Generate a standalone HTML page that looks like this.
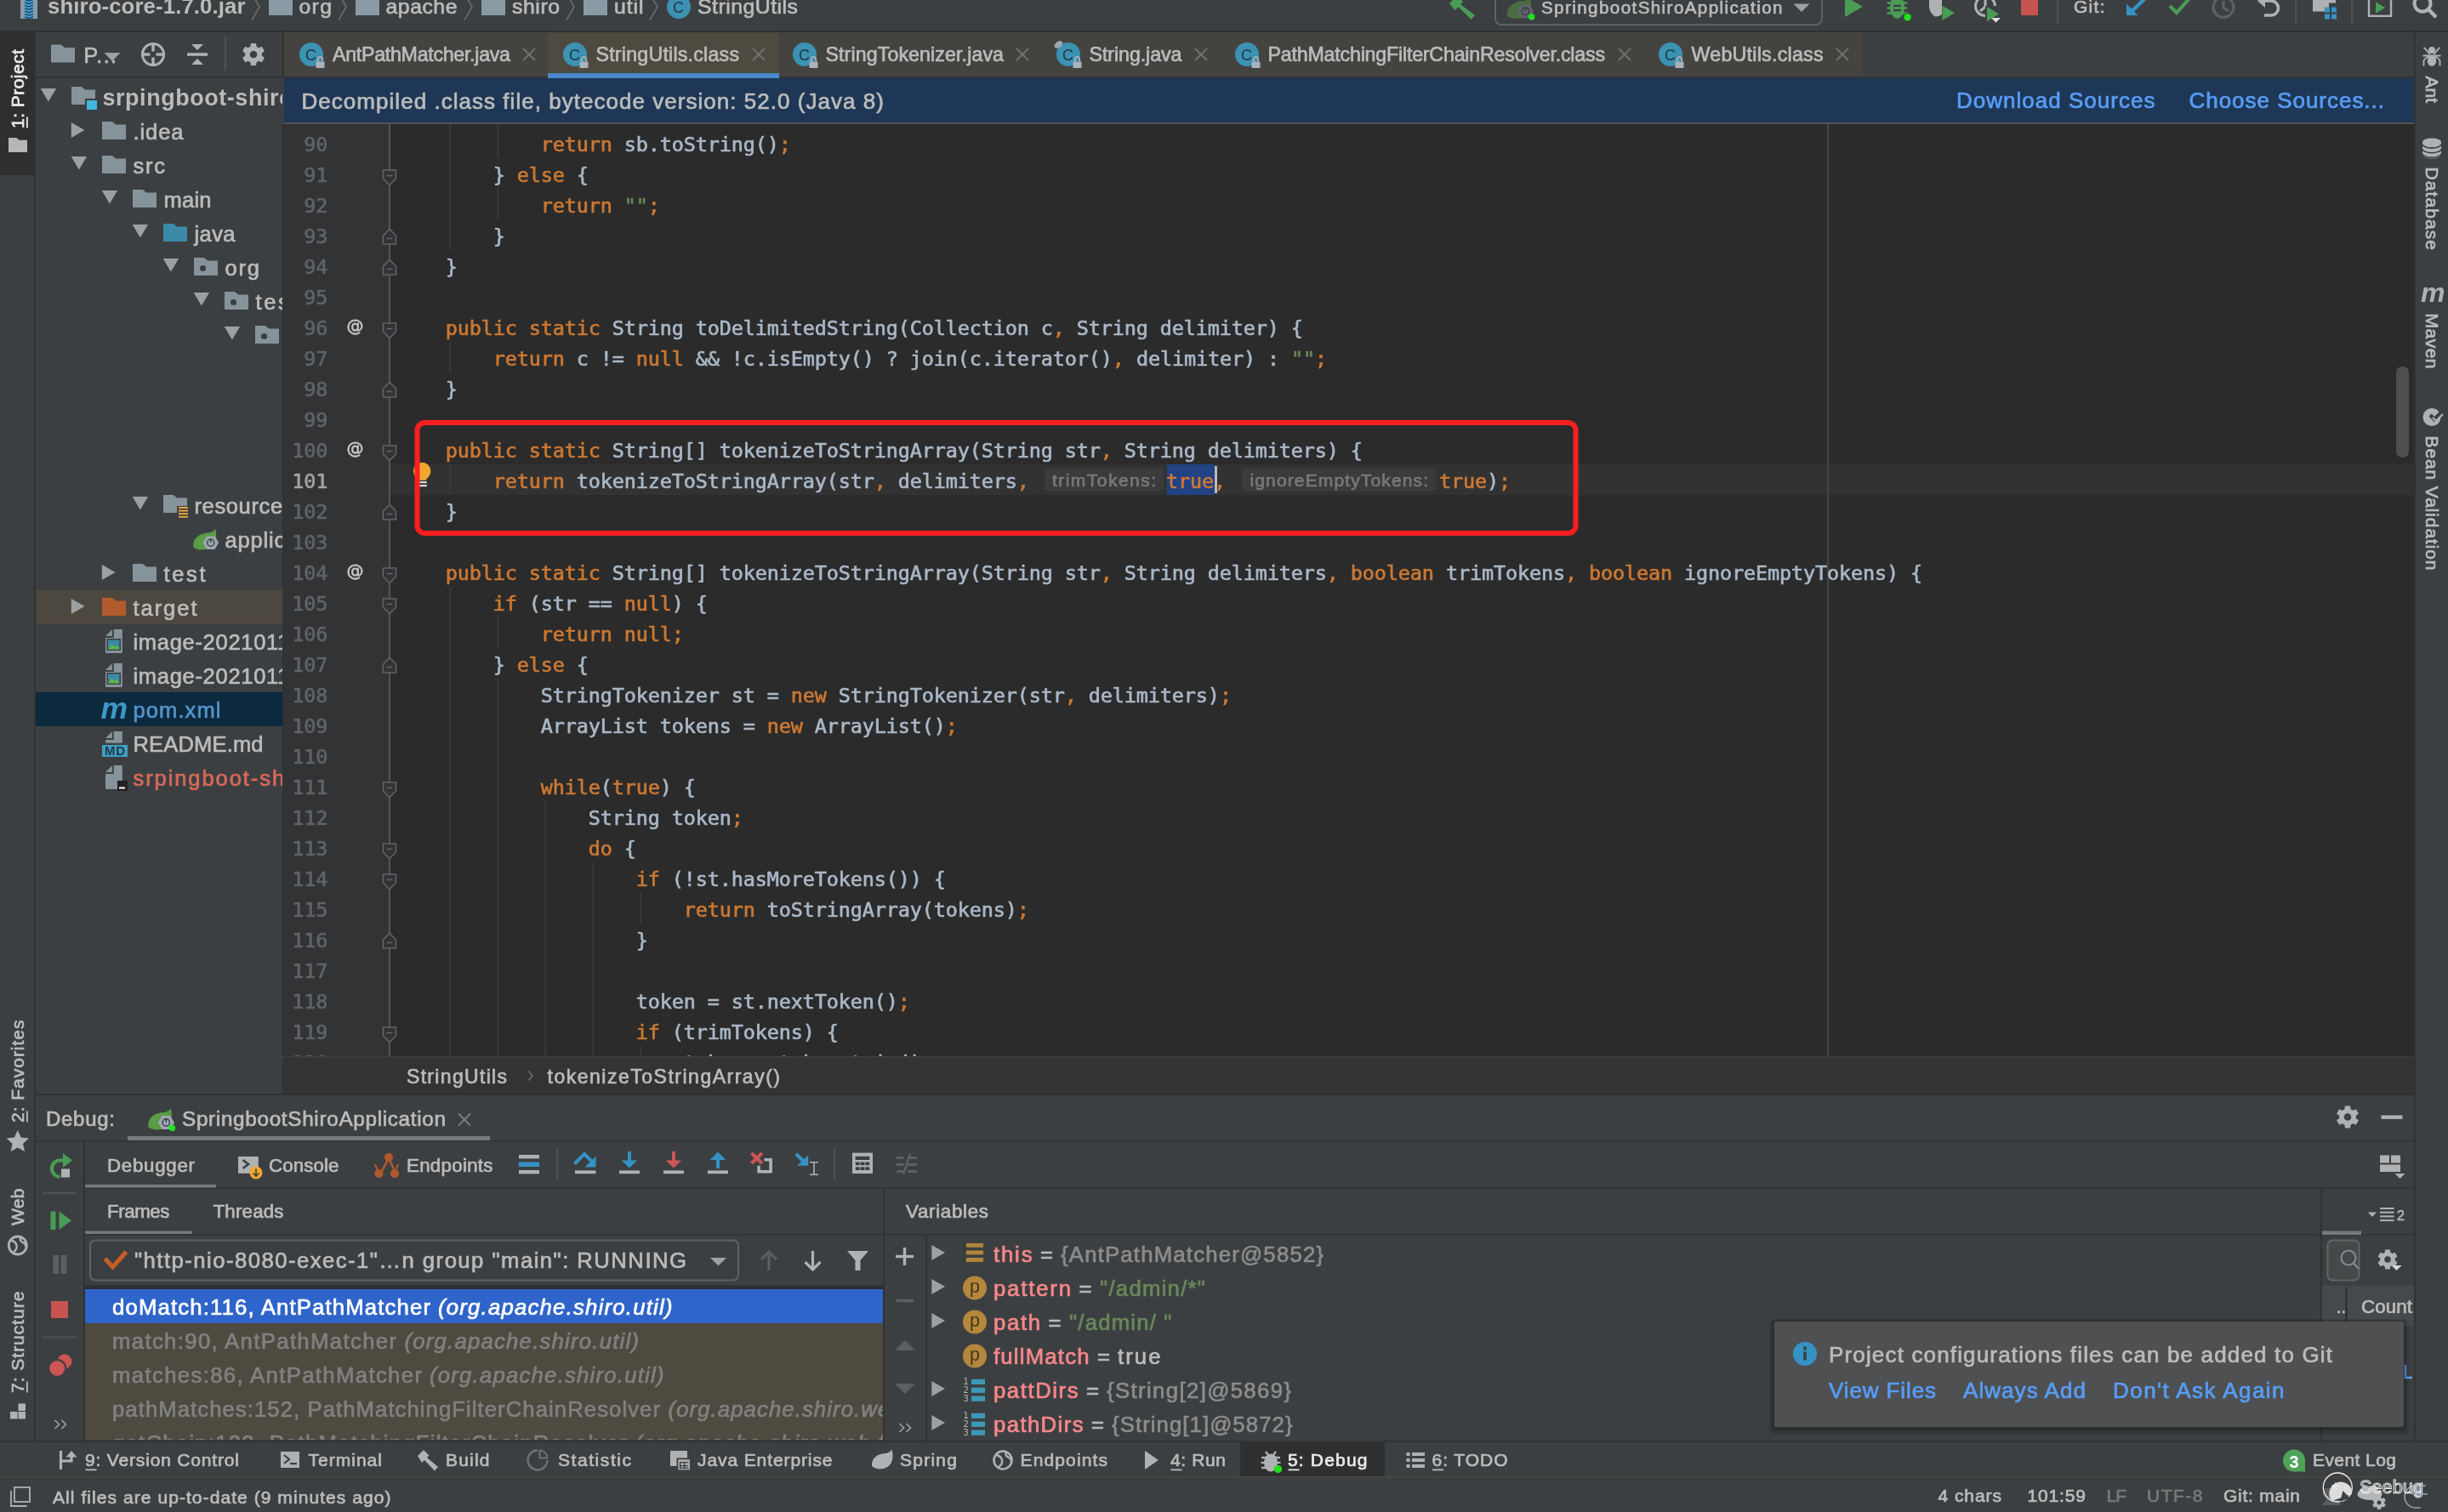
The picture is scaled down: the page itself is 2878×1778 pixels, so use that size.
<!DOCTYPE html>
<html lang="en"><head><meta charset="utf-8"><title>StringUtils.class - srpingboot-shiro</title>
<style>
html,body{margin:0;padding:0;background:#3c3f41;overflow:hidden}
svg{display:block;font-family:"Liberation Sans", "Noto Sans CJK SC", sans-serif;will-change:transform}
text{white-space:pre}
.code{font-family:"DejaVu Sans Mono", "Liberation Mono", monospace;font-size:23.5px;letter-spacing:-0.148px;stroke-width:0.65px}
</style></head><body>
<svg width="2878" height="1778" viewBox="0 0 2878 1778">
<rect x="0" y="0" width="2878" height="1778" fill="#3c3f41"/>
<rect x="0" y="36" width="2878" height="2" fill="#2d2f30"/>
<rect x="0" y="38" width="40" height="1656" fill="#3c3f41"/>
<rect x="0" y="38" width="40" height="168" fill="#2d2f30"/>
<rect x="40" y="38" width="2" height="1656" fill="#323232"/>
<rect x="2838" y="38" width="40" height="1656" fill="#3c3f41"/>
<rect x="2838" y="38" width="2" height="1656" fill="#323232"/>
<rect x="24" y="-6" width="5" height="28" fill="#8a9ba6"/>
<rect x="39" y="-6" width="5" height="28" fill="#8a9ba6"/>
<rect x="29" y="-6" width="10" height="28" fill="#3a9ad0"/>
<path d="M29,-4.0 l5,1.7 l5,-1.7" fill="none" stroke="#1d2b33" stroke-width="1"/>
<path d="M29,-0.6 l5,1.7 l5,-1.7" fill="none" stroke="#1d2b33" stroke-width="1"/>
<path d="M29,2.8 l5,1.7 l5,-1.7" fill="none" stroke="#1d2b33" stroke-width="1"/>
<path d="M29,6.2 l5,1.7 l5,-1.7" fill="none" stroke="#1d2b33" stroke-width="1"/>
<path d="M29,9.6 l5,1.7 l5,-1.7" fill="none" stroke="#1d2b33" stroke-width="1"/>
<path d="M29,13.0 l5,1.7 l5,-1.7" fill="none" stroke="#1d2b33" stroke-width="1"/>
<path d="M29,16.4 l5,1.7 l5,-1.7" fill="none" stroke="#1d2b33" stroke-width="1"/>
<path d="M29,19.8 l5,1.7 l5,-1.7" fill="none" stroke="#1d2b33" stroke-width="1"/>
<text x="56" y="16.3" font-size="25.8" fill="#bbbbbb" textLength="232.5" lengthAdjust="spacing" font-weight="bold">shiro-core-1.7.0.jar</text>
<path d="M296,-7.5 l9,15.6 l-9,15.6" fill="none" stroke="#6b6e70" stroke-width="1.6"/>
<path d="M316,-4 h11.8 l4.6,3.5 H344 V18 H316 Z" fill="#8a9ba6"/>
<text x="351.5" y="16.3" font-size="24.82" fill="#bbbbbb" textLength="38.5" lengthAdjust="spacing" stroke="#bbbbbb" stroke-width="0.7">org</text>
<path d="M398,-7.5 l9,15.6 l-9,15.6" fill="none" stroke="#6b6e70" stroke-width="1.6"/>
<path d="M418,-4 h11.8 l4.6,3.5 H446 V18 H418 Z" fill="#8a9ba6"/>
<text x="453.5" y="16.3" font-size="24.82" fill="#bbbbbb" textLength="84.0" lengthAdjust="spacing" stroke="#bbbbbb" stroke-width="0.7">apache</text>
<path d="M546,-7.5 l9,15.6 l-9,15.6" fill="none" stroke="#6b6e70" stroke-width="1.6"/>
<path d="M566,-4 h11.8 l4.6,3.5 H594 V18 H566 Z" fill="#8a9ba6"/>
<text x="602" y="16.3" font-size="24.82" fill="#bbbbbb" textLength="56" lengthAdjust="spacing" stroke="#bbbbbb" stroke-width="0.7">shiro</text>
<path d="M666,-7.5 l9,15.6 l-9,15.6" fill="none" stroke="#6b6e70" stroke-width="1.6"/>
<path d="M686,-4 h11.8 l4.6,3.5 H714 V18 H686 Z" fill="#8a9ba6"/>
<text x="722" y="16.3" font-size="24.82" fill="#bbbbbb" textLength="34.5" lengthAdjust="spacing" stroke="#bbbbbb" stroke-width="0.7">util</text>
<path d="M764,-7.5 l9,15.6 l-9,15.6" fill="none" stroke="#6b6e70" stroke-width="1.6"/>
<circle cx="798" cy="8" r="14" fill="#3b92b2"/>
<text x="797.5" y="14.5" font-size="18" fill="#1f3640" font-weight="400" text-anchor="middle">C</text>
<text x="820" y="16.3" font-size="24.82" fill="#bbbbbb" textLength="118" lengthAdjust="spacing" stroke="#bbbbbb" stroke-width="0.7">StringUtils</text>
<path d="M1704,4 l9,-9 l7,7 l-3,3 l17,13 l-4.5,5 l-15,-15 l-4,4 Z" fill="#499c54"/>
<rect x="1758" y="-12" width="384" height="41" fill="none" rx="7" stroke="#5e6366" stroke-width="2"/>
<g transform="translate(1772,1) scale(0.82)">
<path d="M0,22 C-2,8 10,0 24,0 C28,-1 31,-3 33,-6 C36,6 34,20 22,24 C14,27 6,26 0,22 Z" fill="#4a6b3f"/>
<path d="M14,15 l6,-10 h12 l6,10 l-6,10 h-12 Z" fill="#5d6469"/>
<circle cx="26" cy="15" r="5.2" fill="none" stroke="#3c3f41" stroke-width="1.8"/>
<line x1="26" y1="8.5" x2="26" y2="14.5" stroke="#3c3f41" stroke-width="2" />
<circle cx="35" cy="23" r="4.6" fill="#1fe21a"/>
</g>
<text x="1812" y="15.9" font-size="20.52" fill="#bbbbbb" textLength="283.5" lengthAdjust="spacing" stroke="#bbbbbb" stroke-width="0.7">SpringbootShiroApplication</text>
<path d="M2108.5,4.5 h19 l-9.5,9.5 Z" fill="#9da0a2"/>
<g transform="translate(0,5)">
<path d="M2169,-9.5 l21,12.2 l-21,12.2 Z" fill="#499c54"/>
<ellipse cx="2230.5" cy="3.5" rx="8.6" ry="13.2" fill="#499c54"/>
<rect x="2218.6" y="-2.8" width="23.6" height="2.6" fill="#499c54"/>
<rect x="2218.6" y="3.2" width="23.6" height="2.6" fill="#499c54"/>
<rect x="2218.6" y="9.2" width="23.6" height="2.6" fill="#499c54"/>
<rect x="2226" y="0.7" width="9" height="2.3" fill="#3c3f41"/>
<rect x="2226" y="5.9" width="9" height="2.3" fill="#3c3f41"/>
<circle cx="2242.6" cy="15.3" r="5.2" fill="#3c3f41"/>
<circle cx="2242.6" cy="15.3" r="4.2" fill="#1fe21a"/>
<path d="M2268,-10 h15 v22 c-3,2 -6,2.5 -8,2.5 c-5,-3 -7,-8 -7,-14 Z" fill="#afb1b3"/>
<path d="M2283.5,1.5 l14.5,8.8 l-14.5,8.8 Z" fill="#499c54"/>
<circle cx="2334" cy="2" r="11.5" fill="none" stroke="#afb1b3" stroke-width="3"/>
<line x1="2334" y1="-5" x2="2334" y2="3" stroke="#afb1b3" stroke-width="3" />
<line x1="2334" y1="3" x2="2328" y2="8" stroke="#afb1b3" stroke-width="3" />
<path d="M2334,2 h14 v14 h-14 Z" fill="#3c3f41"/>
<path d="M2336,3 l14,8.5 l-14,8.5 Z" fill="#499c54"/>
<path d="M2341,16 h11 l-5.5,5.5 Z" fill="#e0e0e0"/>
<rect x="2376" y="-8" width="20" height="21" fill="#c75450"/>
</g>
<line x1="2419" y1="-4" x2="2419" y2="28" stroke="#515151" stroke-width="2" />
<text x="2438" y="15" font-size="21.02" fill="#bbbbbb" textLength="36.5" lengthAdjust="spacing" stroke="#bbbbbb" stroke-width="0.7">Git:</text>
<g transform="translate(0,4)">
<path d="M2521.5,-5.5 L2505,10.5" fill="none" stroke="#3592c4" stroke-width="4.4"/>
<path d="M2500,0.5 V14.1 H2513.6 Z" fill="#3592c4"/>
<path d="M2551,3 l8,8 l16,-18" fill="none" stroke="#499c54" stroke-width="4.2"/>
<circle cx="2614" cy="4.4" r="12" fill="none" stroke="#5c5f61" stroke-width="3.4"/>
<path d="M2614,-3 V5 l6,4" fill="none" stroke="#5c5f61" stroke-width="3.2"/>
<path d="M2657,-3 H2670 a8.5,8.5 0 0 1 0,17 H2662" fill="none" stroke="#afb1b3" stroke-width="3.6"/>
<path d="M2654,-3 l9,-8 v16 Z" fill="#afb1b3"/>
</g>
<line x1="2699" y1="-4" x2="2699" y2="28" stroke="#515151" stroke-width="2" />
<g transform="translate(0,-0.5)">
<path d="M2719,-10 h11 l3,3 h13 v11 h-8 v10 h-19 Z" fill="#afb1b3"/>
<rect x="2733" y="9" width="6" height="6" fill="#3592c4"/>
<rect x="2741" y="9" width="6" height="6" fill="#3592c4"/>
<rect x="2733" y="17" width="6" height="6" fill="#3592c4"/>
<rect x="2741" y="17" width="6" height="6" fill="#3592c4"/>
</g>
<line x1="2765" y1="-4" x2="2765" y2="28" stroke="#515151" stroke-width="2" />
<g transform="translate(0,0.8)">
<rect x="2785" y="-6" width="26" height="24" fill="none" stroke="#afb1b3" stroke-width="2.4"/>
<path d="M2793,1.5 l11.5,6.7 l-11.5,6.7 Z" fill="#499c54"/>
<circle cx="2848" cy="3.2" r="9.5" fill="none" stroke="#afb1b3" stroke-width="4"/>
<line x1="2855" y1="10.2" x2="2864" y2="19.5" stroke="#afb1b3" stroke-width="4.5" />
</g>
<clipPath id="cpProj"><rect x="42" y="38" width="290" height="1249"/></clipPath>
<g clip-path="url(#cpProj)">
<path d="M60,52.5 h11.8 l4.4,3.4 H88 V73.5 H60 Z" fill="#87939a"/>
<text x="98.5" y="74" font-size="25.02" fill="#bbbbbb" textLength="38.5" lengthAdjust="spacing" stroke="#bbbbbb" stroke-width="0.7">P...</text>
<path d="M122.5,62 h19 l-9.5,10 Z" fill="#9da0a2"/>
<circle cx="180" cy="64" r="12.5" fill="none" stroke="#afb1b3" stroke-width="3"/>
<line x1="180" y1="50" x2="180" y2="60.5" stroke="#afb1b3" stroke-width="3.4" />
<line x1="180" y1="67.5" x2="180" y2="78" stroke="#afb1b3" stroke-width="3.4" />
<line x1="166" y1="64" x2="176.5" y2="64" stroke="#afb1b3" stroke-width="3.4" />
<line x1="183.5" y1="64" x2="194" y2="64" stroke="#afb1b3" stroke-width="3.4" />
<line x1="220" y1="64" x2="244" y2="64" stroke="#afb1b3" stroke-width="3.6" />
<path d="M225,52 h14 l-7,7 Z" fill="#afb1b3"/>
<path d="M225,76 h14 l-7,-7 Z" fill="#afb1b3"/>
<line x1="265" y1="44" x2="265" y2="83" stroke="#515151" stroke-width="2" />
<path d="M295.3,55.2 L295.5,51.7 L300.5,51.7 L300.7,55.2 L304.3,57.2 L307.4,55.7 L309.9,60.0 L307.0,61.9 L307.0,66.1 L309.9,68.0 L307.4,72.3 L304.3,70.8 L300.7,72.8 L300.5,76.3 L295.5,76.3 L295.3,72.8 L291.7,70.8 L288.6,72.3 L286.1,68.0 L289.0,66.1 L289.0,61.9 L286.1,60.0 L288.6,55.7 L291.7,57.2 Z" fill="#afb1b3" stroke="#afb1b3" stroke-width="1.6" stroke-linejoin="round"/>
<circle cx="298" cy="64" r="9.55" fill="#afb1b3"/>
<circle cx="298" cy="64" r="4.25" fill="#3c3f41"/>
<rect x="42" y="90" width="290" height="2" fill="#323232"/>
<path d="M47.7,104 h18.4 l-9.2,15.6 Z" fill="#9da0a2"/>
<path d="M84,102 h11.8 l4.4,3.4 H112 V123 H84 Z" fill="#87939a"/>
<rect x="100" y="116" width="14" height="14" fill="#3c3f41"/>
<rect x="102" y="118" width="12" height="11" fill="#40b6e0"/>
<text x="120.5" y="123.6" font-size="27" fill="#bbbbbb" textLength="224.0" lengthAdjust="spacing" font-weight="bold">srpingboot-shiro</text>
<path d="M83.8,144.1 l15.7,9 l-15.7,9 Z" fill="#9da0a2"/>
<path d="M120,143 h11.8 l4.4,3.4 H148 V164 H120 Z" fill="#87939a"/>
<text x="156.5" y="163.6" font-size="25.52" fill="#bbbbbb" textLength="59.0" lengthAdjust="spacing" stroke="#bbbbbb" stroke-width="0.7">.idea</text>
<path d="M83.7,184 h18.4 l-9.2,15.6 Z" fill="#9da0a2"/>
<path d="M120,183 h11.8 l4.4,3.4 H148 V204 H120 Z" fill="#87939a"/>
<text x="156.5" y="203.6" font-size="25.52" fill="#bbbbbb" textLength="37.5" lengthAdjust="spacing" stroke="#bbbbbb" stroke-width="0.7">src</text>
<path d="M119.7,224 h18.4 l-9.2,15.6 Z" fill="#9da0a2"/>
<path d="M156,223 h11.8 l4.4,3.4 H184 V244 H156 Z" fill="#87939a"/>
<text x="192.5" y="243.6" font-size="25.52" fill="#bbbbbb" textLength="56.0" lengthAdjust="spacing" stroke="#bbbbbb" stroke-width="0.7">main</text>
<path d="M155.7,264 h18.4 l-9.2,15.6 Z" fill="#9da0a2"/>
<path d="M192,263 h11.8 l4.4,3.4 H220 V284 H192 Z" fill="#3a8aa8"/>
<text x="228.5" y="283.6" font-size="25.52" fill="#bbbbbb" textLength="48.0" lengthAdjust="spacing" stroke="#bbbbbb" stroke-width="0.7">java</text>
<path d="M191.7,304 h18.4 l-9.2,15.6 Z" fill="#9da0a2"/>
<path d="M228,303 h11.8 l4.4,3.4 H256 V324 H228 Z" fill="#87939a"/>
<circle cx="238.5" cy="315.5" r="3.6" fill="#3c3f41"/>
<text x="264.5" y="323.6" font-size="25.52" fill="#bbbbbb" textLength="40.5" lengthAdjust="spacing" stroke="#bbbbbb" stroke-width="0.7">org</text>
<path d="M227.7,344 h18.4 l-9.2,15.6 Z" fill="#9da0a2"/>
<path d="M264,343 h11.8 l4.4,3.4 H292 V364 H264 Z" fill="#87939a"/>
<circle cx="274.5" cy="355.5" r="3.6" fill="#3c3f41"/>
<text x="300.5" y="363.6" font-size="25.52" fill="#bbbbbb" textLength="49.0" lengthAdjust="spacing" stroke="#bbbbbb" stroke-width="0.7">test</text>
<path d="M263.7,384 h18.4 l-9.2,15.6 Z" fill="#9da0a2"/>
<path d="M300,383 h11.8 l4.4,3.4 H328 V404 H300 Z" fill="#87939a"/>
<circle cx="310.5" cy="395.5" r="3.6" fill="#3c3f41"/>
<text x="336.5" y="403.6" font-size="25.52" fill="#bbbbbb" textLength="59.2" lengthAdjust="spacing" stroke="#bbbbbb" stroke-width="0.7">shiro</text>
<path d="M155.7,584 h18.4 l-9.2,15.6 Z" fill="#9da0a2"/>
<path d="M192,582 h11.8 l4.4,3.4 H220 V603 H192 Z" fill="#87939a"/>
<rect x="208" y="595" width="15" height="15" fill="#3c3f41"/>
<rect x="210" y="596.0" width="11" height="2" fill="#e8a33d"/>
<rect x="210" y="599.6" width="11" height="2" fill="#e8a33d"/>
<rect x="210" y="603.2" width="11" height="2" fill="#e8a33d"/>
<rect x="210" y="606.8" width="11" height="2" fill="#e8a33d"/>
<text x="228.5" y="603.6" font-size="25.52" fill="#bbbbbb" textLength="117.0" lengthAdjust="spacing" stroke="#bbbbbb" stroke-width="0.7">resources</text>
<g transform="translate(227.5,626.5) scale(0.78)">
<path d="M0,22 C-2,8 10,0 24,0 C28,-1 31,-3 33,-6 C36,6 34,20 22,24 C14,27 6,26 0,22 Z" fill="#5a9b46"/>
<path d="M14,15 l6,-10 h12 l6,10 l-6,10 h-12 Z" fill="#9aa7b0"/>
<circle cx="26" cy="15" r="5.2" fill="none" stroke="#3c3f41" stroke-width="1.8"/>
<line x1="26" y1="8.5" x2="26" y2="14.5" stroke="#3c3f41" stroke-width="2" />
</g>
<text x="264.5" y="643.6" font-size="25.52" fill="#bbbbbb" textLength="180.5" lengthAdjust="spacing" stroke="#bbbbbb" stroke-width="0.7">application.yml</text>
<path d="M119.8,664.1 l15.7,9 l-15.7,9 Z" fill="#9da0a2"/>
<path d="M156,663 h11.8 l4.4,3.4 H184 V684 H156 Z" fill="#87939a"/>
<text x="192.5" y="683.6" font-size="25.52" fill="#bbbbbb" textLength="49.0" lengthAdjust="spacing" stroke="#bbbbbb" stroke-width="0.7">test</text>
<rect x="42" y="694" width="290" height="40" fill="#4d483f"/>
<path d="M83.8,704.1 l15.7,9 l-15.7,9 Z" fill="#9da0a2"/>
<path d="M120,703 h11.8 l4.4,3.4 H148 V724 H120 Z" fill="#b25b2c"/>
<text x="156.5" y="723.6" font-size="25.52" fill="#bbbbbb" textLength="75.0" lengthAdjust="spacing" stroke="#bbbbbb" stroke-width="0.7">target</text>
<path d="M133.8,740 h10 v28 h-19.8 v-18 h9.8 Z" fill="#87939a"/>
<path d="M124,748.1 l7.9,-7.9 v7.9 Z" fill="#87939a"/>
<rect x="125.5" y="751" width="16.5" height="14" fill="#3c3f41"/>
<rect x="127" y="752.5" width="13.5" height="11" fill="#3a8aa8"/>
<path d="M127,763.5 l4.5,-6 l3.5,3.5 l2.5,-2.5 l3,5 Z" fill="#62b543"/>
<text x="156.5" y="763.6" font-size="25.52" fill="#bbbbbb" textLength="340.3" lengthAdjust="spacing" stroke="#bbbbbb" stroke-width="0.7">image-20210113142305.png</text>
<path d="M133.8,780 h10 v28 h-19.8 v-18 h9.8 Z" fill="#87939a"/>
<path d="M124,788.1 l7.9,-7.9 v7.9 Z" fill="#87939a"/>
<rect x="125.5" y="791" width="16.5" height="14" fill="#3c3f41"/>
<rect x="127" y="792.5" width="13.5" height="11" fill="#3a8aa8"/>
<path d="M127,803.5 l4.5,-6 l3.5,3.5 l2.5,-2.5 l3,5 Z" fill="#62b543"/>
<text x="156.5" y="803.6" font-size="25.52" fill="#bbbbbb" textLength="340.3" lengthAdjust="spacing" stroke="#bbbbbb" stroke-width="0.7">image-20210113142410.png</text>
<rect x="42" y="814" width="290" height="40" fill="#0d293e"/>
<text x="118.5" y="844.5" font-size="35.5" fill="#3b99c4" textLength="30.0" lengthAdjust="spacing" font-weight="bold" font-style="italic">m</text>
<text x="156.5" y="843.6" font-size="25.52" fill="#5394c9" textLength="103.0" lengthAdjust="spacing" stroke="#5394c9" stroke-width="0.7">pom.xml</text>
<path d="M133.8,860 h10 v13.8 h-19.8 v-3.8000000000000007 h9.8 Z" fill="#87939a"/>
<path d="M124,868.1 l7.9,-7.9 v7.9 Z" fill="#87939a"/>
<rect x="120" y="876" width="30" height="14" fill="#3e9fc1"/>
<text x="123" y="888.2" font-size="15" fill="#1f3a4a" textLength="24" lengthAdjust="spacing" font-weight="bold">MD</text>
<text x="156.5" y="883.6" font-size="25.52" fill="#bbbbbb" textLength="153.0" lengthAdjust="spacing" stroke="#bbbbbb" stroke-width="0.7">README.md</text>
<path d="M133.8,900 h10 v28 h-19.8 v-18 h9.8 Z" fill="#87939a"/>
<path d="M124,908.1 l7.9,-7.9 v7.9 Z" fill="#87939a"/>
<rect x="138" y="918" width="12" height="12" fill="#231f20"/>
<rect x="140" y="925.5" width="7" height="2" fill="#ffffff"/>
<text x="156.5" y="923.6" font-size="25.52" fill="#d7695b" textLength="259.0" lengthAdjust="spacing" stroke="#d7695b" stroke-width="0.7">srpingboot-shiro.iml</text>
</g>
<rect x="42" y="1286" width="290" height="2" fill="#2d2f30"/>
<rect x="332" y="38" width="2506" height="52" fill="#3c3f41"/>
<rect x="332" y="38" width="2" height="52" fill="#323232"/>
<rect x="334" y="38" width="1856" height="52" fill="#454340"/>
<rect x="644" y="38" width="272" height="54" fill="#4e4a40"/>
<rect x="332" y="90" width="2506" height="2" fill="#323232"/>
<rect x="644" y="86" width="272" height="6" fill="#4a88c7"/>
<circle cx="366" cy="64" r="14" fill="#3b92b2"/>
<text x="365.5" y="70.5" font-size="18" fill="#1f3640" font-weight="400" text-anchor="middle">C</text>
<rect x="371.5" y="72.5" width="10" height="7.5" fill="#a9b3bd"/>
<path d="M373.8,72.5 v-3 a2.7,2.7 0 0 1 5.4,0 v3" fill="none" stroke="#a9b3bd" stroke-width="1.8"/>
<text x="391" y="72.2" font-size="23.22" fill="#bbbbbb" textLength="209" lengthAdjust="spacing" stroke="#bbbbbb" stroke-width="0.7">AntPathMatcher.java</text>
<line x1="615" y1="57" x2="629" y2="71" stroke="#6e7370" stroke-width="1.8" />
<line x1="615" y1="71" x2="629" y2="57" stroke="#6e7370" stroke-width="1.8" />
<circle cx="676" cy="64" r="14" fill="#3b92b2"/>
<text x="675.5" y="70.5" font-size="18" fill="#1f3640" font-weight="400" text-anchor="middle">C</text>
<rect x="681.5" y="72.5" width="10" height="7.5" fill="#a9b3bd"/>
<path d="M683.8,72.5 v-3 a2.7,2.7 0 0 1 5.4,0 v3" fill="none" stroke="#a9b3bd" stroke-width="1.8"/>
<text x="700.5" y="72.2" font-size="23.22" fill="#bbbbbb" textLength="168.5" lengthAdjust="spacing" stroke="#bbbbbb" stroke-width="0.7">StringUtils.class</text>
<line x1="885" y1="57" x2="899" y2="71" stroke="#6e7370" stroke-width="1.8" />
<line x1="885" y1="71" x2="899" y2="57" stroke="#6e7370" stroke-width="1.8" />
<circle cx="946" cy="64" r="14" fill="#3b92b2"/>
<text x="945.5" y="70.5" font-size="18" fill="#1f3640" font-weight="400" text-anchor="middle">C</text>
<rect x="951.5" y="72.5" width="10" height="7.5" fill="#a9b3bd"/>
<path d="M953.8,72.5 v-3 a2.7,2.7 0 0 1 5.4,0 v3" fill="none" stroke="#a9b3bd" stroke-width="1.8"/>
<text x="970.5" y="72.2" font-size="23.22" fill="#bbbbbb" textLength="209.5" lengthAdjust="spacing" stroke="#bbbbbb" stroke-width="0.7">StringTokenizer.java</text>
<line x1="1195" y1="57" x2="1209" y2="71" stroke="#6e7370" stroke-width="1.8" />
<line x1="1195" y1="71" x2="1209" y2="57" stroke="#6e7370" stroke-width="1.8" />
<circle cx="1256" cy="64" r="14" fill="#3b92b2"/>
<text x="1255.5" y="70.5" font-size="18" fill="#1f3640" font-weight="400" text-anchor="middle">C</text>
<rect x="1261.5" y="72.5" width="10" height="7.5" fill="#a9b3bd"/>
<path d="M1263.8,72.5 v-3 a2.7,2.7 0 0 1 5.4,0 v3" fill="none" stroke="#a9b3bd" stroke-width="1.8"/>
<text x="1280.5" y="72.2" font-size="23.22" fill="#bbbbbb" textLength="109.0" lengthAdjust="spacing" stroke="#bbbbbb" stroke-width="0.7">String.java</text>
<line x1="1405" y1="57" x2="1419" y2="71" stroke="#6e7370" stroke-width="1.8" />
<line x1="1405" y1="71" x2="1419" y2="57" stroke="#6e7370" stroke-width="1.8" />
<circle cx="1466" cy="64" r="14" fill="#3b92b2"/>
<text x="1465.5" y="70.5" font-size="18" fill="#1f3640" font-weight="400" text-anchor="middle">C</text>
<rect x="1471.5" y="72.5" width="10" height="7.5" fill="#a9b3bd"/>
<path d="M1473.8,72.5 v-3 a2.7,2.7 0 0 1 5.4,0 v3" fill="none" stroke="#a9b3bd" stroke-width="1.8"/>
<text x="1490.5" y="72.2" font-size="23.22" fill="#bbbbbb" textLength="396.5" lengthAdjust="spacing" stroke="#bbbbbb" stroke-width="0.7">PathMatchingFilterChainResolver.class</text>
<line x1="1903" y1="57" x2="1917" y2="71" stroke="#6e7370" stroke-width="1.8" />
<line x1="1903" y1="71" x2="1917" y2="57" stroke="#6e7370" stroke-width="1.8" />
<circle cx="1964" cy="64" r="14" fill="#3b92b2"/>
<text x="1963.5" y="70.5" font-size="18" fill="#1f3640" font-weight="400" text-anchor="middle">C</text>
<rect x="1969.5" y="72.5" width="10" height="7.5" fill="#a9b3bd"/>
<path d="M1971.8,72.5 v-3 a2.7,2.7 0 0 1 5.4,0 v3" fill="none" stroke="#a9b3bd" stroke-width="1.8"/>
<text x="1988.5" y="72.2" font-size="23.22" fill="#bbbbbb" textLength="155.0" lengthAdjust="spacing" stroke="#bbbbbb" stroke-width="0.7">WebUtils.class</text>
<line x1="2159" y1="57" x2="2173" y2="71" stroke="#6e7370" stroke-width="1.8" />
<line x1="2159" y1="71" x2="2173" y2="57" stroke="#6e7370" stroke-width="1.8" />
<ellipse cx="1244.5" cy="52.5" rx="5.5" ry="3.6" fill="#9aa7b0" transform="rotate(-35 1244.5 52.5)"/>
<rect x="334" y="92" width="2504" height="52" fill="#1e3756"/>
<rect x="334" y="144" width="2504" height="2" fill="#555555"/>
<text x="354.5" y="127.7" font-size="26.02" fill="#bbbbbb" textLength="684.5" lengthAdjust="spacing" stroke="#bbbbbb" stroke-width="0.7">Decompiled .class file, bytecode version: 52.0 (Java 8)</text>
<text x="2300" y="126.5" font-size="26.02" fill="#589df6" textLength="233.5" lengthAdjust="spacing" stroke="#589df6" stroke-width="0.7">Download Sources</text>
<text x="2573.5" y="126.5" font-size="26.02" fill="#589df6" textLength="229.5" lengthAdjust="spacing" stroke="#589df6" stroke-width="0.7">Choose Sources...</text>
<rect x="332" y="146" width="126" height="1096" fill="#313335"/>
<rect x="458" y="146" width="2380" height="1096" fill="#2b2b2b"/>
<clipPath id="cpEd"><rect x="332" y="146" width="2506" height="1096"/></clipPath>
<g clip-path="url(#cpEd)">
<rect x="458" y="546" width="2380" height="36" fill="#323232"/>
<line x1="2149" y1="146" x2="2149" y2="1242" stroke="#454545" stroke-width="2" />
<line x1="458" y1="146" x2="458" y2="1242" stroke="#555555" stroke-width="2" />
<line x1="529.3" y1="114" x2="529.3" y2="294" stroke="#3a3a3a" stroke-width="2" />
<line x1="585.3" y1="114" x2="585.3" y2="186" stroke="#3a3a3a" stroke-width="2" />
<line x1="585.3" y1="222" x2="585.3" y2="258" stroke="#3a3a3a" stroke-width="2" />
<line x1="529.3" y1="402" x2="529.3" y2="438" stroke="#3a3a3a" stroke-width="2" />
<line x1="529.3" y1="546" x2="529.3" y2="582" stroke="#3a3a3a" stroke-width="2" />
<line x1="529.3" y1="690" x2="529.3" y2="1626" stroke="#3a3a3a" stroke-width="2" />
<line x1="585.3" y1="726" x2="585.3" y2="762" stroke="#3a3a3a" stroke-width="2" />
<line x1="585.3" y1="798" x2="585.3" y2="1626" stroke="#3a3a3a" stroke-width="2" />
<line x1="641.3" y1="942" x2="641.3" y2="1626" stroke="#3a3a3a" stroke-width="2" />
<line x1="697.3" y1="1014" x2="697.3" y2="1626" stroke="#3a3a3a" stroke-width="2" />
<line x1="753.3" y1="1050" x2="753.3" y2="1086" stroke="#3a3a3a" stroke-width="2" />
<line x1="753.3" y1="1230" x2="753.3" y2="1302" stroke="#3a3a3a" stroke-width="2" />
<text class="code" x="635.8" y="177.8"><tspan fill="#cc7832" stroke="#cc7832">return </tspan><tspan fill="#a9b7c6" stroke="#a9b7c6">sb.toString()</tspan><tspan fill="#cc7832" stroke="#cc7832">;</tspan></text>
<text class="code" x="579.8" y="213.8"><tspan fill="#a9b7c6" stroke="#a9b7c6">} </tspan><tspan fill="#cc7832" stroke="#cc7832">else </tspan><tspan fill="#a9b7c6" stroke="#a9b7c6">{</tspan></text>
<text class="code" x="635.8" y="249.8"><tspan fill="#cc7832" stroke="#cc7832">return </tspan><tspan fill="#6a8759" stroke="#6a8759">""</tspan><tspan fill="#cc7832" stroke="#cc7832">;</tspan></text>
<text class="code" x="579.8" y="285.8"><tspan fill="#a9b7c6" stroke="#a9b7c6">}</tspan></text>
<text class="code" x="523.8" y="321.8"><tspan fill="#a9b7c6" stroke="#a9b7c6">}</tspan></text>
<text class="code" x="523.8" y="393.8"><tspan fill="#cc7832" stroke="#cc7832">public static </tspan><tspan fill="#a9b7c6" stroke="#a9b7c6">String toDelimitedString(Collection c</tspan><tspan fill="#cc7832" stroke="#cc7832">, </tspan><tspan fill="#a9b7c6" stroke="#a9b7c6">String delimiter) {</tspan></text>
<text class="code" x="579.8" y="429.8"><tspan fill="#cc7832" stroke="#cc7832">return </tspan><tspan fill="#a9b7c6" stroke="#a9b7c6">c != </tspan><tspan fill="#cc7832" stroke="#cc7832">null </tspan><tspan fill="#a9b7c6" stroke="#a9b7c6">&amp;&amp; !c.isEmpty() ? join(c.iterator()</tspan><tspan fill="#cc7832" stroke="#cc7832">, </tspan><tspan fill="#a9b7c6" stroke="#a9b7c6">delimiter) : </tspan><tspan fill="#6a8759" stroke="#6a8759">""</tspan><tspan fill="#cc7832" stroke="#cc7832">;</tspan></text>
<text class="code" x="523.8" y="465.8"><tspan fill="#a9b7c6" stroke="#a9b7c6">}</tspan></text>
<text class="code" x="523.8" y="537.8"><tspan fill="#cc7832" stroke="#cc7832">public static </tspan><tspan fill="#a9b7c6" stroke="#a9b7c6">String[] tokenizeToStringArray(String str</tspan><tspan fill="#cc7832" stroke="#cc7832">, </tspan><tspan fill="#a9b7c6" stroke="#a9b7c6">String delimiters) {</tspan></text>
<text class="code" x="523.8" y="609.8"><tspan fill="#a9b7c6" stroke="#a9b7c6">}</tspan></text>
<text class="code" x="523.8" y="681.8"><tspan fill="#cc7832" stroke="#cc7832">public static </tspan><tspan fill="#a9b7c6" stroke="#a9b7c6">String[] tokenizeToStringArray(String str</tspan><tspan fill="#cc7832" stroke="#cc7832">, </tspan><tspan fill="#a9b7c6" stroke="#a9b7c6">String delimiters</tspan><tspan fill="#cc7832" stroke="#cc7832">, boolean </tspan><tspan fill="#a9b7c6" stroke="#a9b7c6">trimTokens</tspan><tspan fill="#cc7832" stroke="#cc7832">, boolean </tspan><tspan fill="#a9b7c6" stroke="#a9b7c6">ignoreEmptyTokens) {</tspan></text>
<text class="code" x="579.8" y="717.8"><tspan fill="#cc7832" stroke="#cc7832">if </tspan><tspan fill="#a9b7c6" stroke="#a9b7c6">(str == </tspan><tspan fill="#cc7832" stroke="#cc7832">null</tspan><tspan fill="#a9b7c6" stroke="#a9b7c6">) {</tspan></text>
<text class="code" x="635.8" y="753.8"><tspan fill="#cc7832" stroke="#cc7832">return null;</tspan></text>
<text class="code" x="579.8" y="789.8"><tspan fill="#a9b7c6" stroke="#a9b7c6">} </tspan><tspan fill="#cc7832" stroke="#cc7832">else </tspan><tspan fill="#a9b7c6" stroke="#a9b7c6">{</tspan></text>
<text class="code" x="635.8" y="825.8"><tspan fill="#a9b7c6" stroke="#a9b7c6">StringTokenizer st = </tspan><tspan fill="#cc7832" stroke="#cc7832">new </tspan><tspan fill="#a9b7c6" stroke="#a9b7c6">StringTokenizer(str</tspan><tspan fill="#cc7832" stroke="#cc7832">, </tspan><tspan fill="#a9b7c6" stroke="#a9b7c6">delimiters)</tspan><tspan fill="#cc7832" stroke="#cc7832">;</tspan></text>
<text class="code" x="635.8" y="861.8"><tspan fill="#a9b7c6" stroke="#a9b7c6">ArrayList tokens = </tspan><tspan fill="#cc7832" stroke="#cc7832">new </tspan><tspan fill="#a9b7c6" stroke="#a9b7c6">ArrayList()</tspan><tspan fill="#cc7832" stroke="#cc7832">;</tspan></text>
<text class="code" x="635.8" y="933.8"><tspan fill="#cc7832" stroke="#cc7832">while</tspan><tspan fill="#a9b7c6" stroke="#a9b7c6">(</tspan><tspan fill="#cc7832" stroke="#cc7832">true</tspan><tspan fill="#a9b7c6" stroke="#a9b7c6">) {</tspan></text>
<text class="code" x="691.8" y="969.8"><tspan fill="#a9b7c6" stroke="#a9b7c6">String token</tspan><tspan fill="#cc7832" stroke="#cc7832">;</tspan></text>
<text class="code" x="691.8" y="1005.8"><tspan fill="#cc7832" stroke="#cc7832">do </tspan><tspan fill="#a9b7c6" stroke="#a9b7c6">{</tspan></text>
<text class="code" x="747.8" y="1041.8"><tspan fill="#cc7832" stroke="#cc7832">if </tspan><tspan fill="#a9b7c6" stroke="#a9b7c6">(!st.hasMoreTokens()) {</tspan></text>
<text class="code" x="803.8" y="1077.8"><tspan fill="#cc7832" stroke="#cc7832">return </tspan><tspan fill="#a9b7c6" stroke="#a9b7c6">toStringArray(tokens)</tspan><tspan fill="#cc7832" stroke="#cc7832">;</tspan></text>
<text class="code" x="747.8" y="1113.8"><tspan fill="#a9b7c6" stroke="#a9b7c6">}</tspan></text>
<text class="code" x="747.8" y="1185.8"><tspan fill="#a9b7c6" stroke="#a9b7c6">token = st.nextToken()</tspan><tspan fill="#cc7832" stroke="#cc7832">;</tspan></text>
<text class="code" x="747.8" y="1221.8"><tspan fill="#cc7832" stroke="#cc7832">if </tspan><tspan fill="#a9b7c6" stroke="#a9b7c6">(trimTokens) {</tspan></text>
<text class="code" x="803.8" y="1257.8"><tspan fill="#a9b7c6" stroke="#a9b7c6">token = token.trim()</tspan><tspan fill="#cc7832" stroke="#cc7832">;</tspan></text>
<text class="code" x="579.8" y="573.8"><tspan fill="#cc7832" stroke="#cc7832">return </tspan><tspan fill="#a9b7c6" stroke="#a9b7c6">tokenizeToStringArray(str</tspan><tspan fill="#cc7832" stroke="#cc7832">, </tspan><tspan fill="#a9b7c6" stroke="#a9b7c6">delimiters</tspan><tspan fill="#cc7832" stroke="#cc7832">,</tspan></text>
<rect x="1228" y="550" width="140" height="28" fill="#3b3b3b" rx="6"/>
<text x="1237" y="572.3" font-size="21.02" fill="#787878" textLength="122" lengthAdjust="spacing" stroke="#787878" stroke-width="0.7">trimTokens:</text>
<rect x="1372" y="546" width="56" height="36" fill="#214283"/>
<text class="code" x="1371.0" y="573.8"><tspan fill="#cc7832" stroke="#cc7832">true</tspan></text>
<rect x="1428" y="548" width="3" height="32" fill="#bbbbbb"/>
<text class="code" x="1427.0" y="573.8"><tspan fill="#cc7832" stroke="#cc7832">,</tspan></text>
<rect x="1460" y="550" width="228" height="28" fill="#3b3b3b" rx="6"/>
<text x="1469.5" y="572.3" font-size="21.02" fill="#787878" textLength="209.5" lengthAdjust="spacing" stroke="#787878" stroke-width="0.7">ignoreEmptyTokens:</text>
<text class="code" x="1692.0" y="573.8"><tspan fill="#cc7832" stroke="#cc7832">true</tspan><tspan fill="#a9b7c6" stroke="#a9b7c6">)</tspan><tspan fill="#cc7832" stroke="#cc7832">;</tspan></text>
<text class="code" x="357.3" y="141.8" fill="#606366" stroke="#606366" stroke-width="0.3">89</text>
<text class="code" x="357.3" y="177.8" fill="#606366" stroke="#606366" stroke-width="0.3">90</text>
<text class="code" x="357.3" y="213.8" fill="#606366" stroke="#606366" stroke-width="0.3">91</text>
<text class="code" x="357.3" y="249.8" fill="#606366" stroke="#606366" stroke-width="0.3">92</text>
<text class="code" x="357.3" y="285.8" fill="#606366" stroke="#606366" stroke-width="0.3">93</text>
<text class="code" x="357.3" y="321.8" fill="#606366" stroke="#606366" stroke-width="0.3">94</text>
<text class="code" x="357.3" y="357.8" fill="#606366" stroke="#606366" stroke-width="0.3">95</text>
<text class="code" x="357.3" y="393.8" fill="#606366" stroke="#606366" stroke-width="0.3">96</text>
<text class="code" x="357.3" y="429.8" fill="#606366" stroke="#606366" stroke-width="0.3">97</text>
<text class="code" x="357.3" y="465.8" fill="#606366" stroke="#606366" stroke-width="0.3">98</text>
<text class="code" x="357.3" y="501.8" fill="#606366" stroke="#606366" stroke-width="0.3">99</text>
<text class="code" x="343.3" y="537.8" fill="#606366" stroke="#606366" stroke-width="0.3">100</text>
<text class="code" x="343.3" y="573.8" fill="#a4a3a3" stroke="#a4a3a3" stroke-width="0.3">101</text>
<text class="code" x="343.3" y="609.8" fill="#606366" stroke="#606366" stroke-width="0.3">102</text>
<text class="code" x="343.3" y="645.8" fill="#606366" stroke="#606366" stroke-width="0.3">103</text>
<text class="code" x="343.3" y="681.8" fill="#606366" stroke="#606366" stroke-width="0.3">104</text>
<text class="code" x="343.3" y="717.8" fill="#606366" stroke="#606366" stroke-width="0.3">105</text>
<text class="code" x="343.3" y="753.8" fill="#606366" stroke="#606366" stroke-width="0.3">106</text>
<text class="code" x="343.3" y="789.8" fill="#606366" stroke="#606366" stroke-width="0.3">107</text>
<text class="code" x="343.3" y="825.8" fill="#606366" stroke="#606366" stroke-width="0.3">108</text>
<text class="code" x="343.3" y="861.8" fill="#606366" stroke="#606366" stroke-width="0.3">109</text>
<text class="code" x="343.3" y="897.8" fill="#606366" stroke="#606366" stroke-width="0.3">110</text>
<text class="code" x="343.3" y="933.8" fill="#606366" stroke="#606366" stroke-width="0.3">111</text>
<text class="code" x="343.3" y="969.8" fill="#606366" stroke="#606366" stroke-width="0.3">112</text>
<text class="code" x="343.3" y="1005.8" fill="#606366" stroke="#606366" stroke-width="0.3">113</text>
<text class="code" x="343.3" y="1041.8" fill="#606366" stroke="#606366" stroke-width="0.3">114</text>
<text class="code" x="343.3" y="1077.8" fill="#606366" stroke="#606366" stroke-width="0.3">115</text>
<text class="code" x="343.3" y="1113.8" fill="#606366" stroke="#606366" stroke-width="0.3">116</text>
<text class="code" x="343.3" y="1149.8" fill="#606366" stroke="#606366" stroke-width="0.3">117</text>
<text class="code" x="343.3" y="1185.8" fill="#606366" stroke="#606366" stroke-width="0.3">118</text>
<text class="code" x="343.3" y="1221.8" fill="#606366" stroke="#606366" stroke-width="0.3">119</text>
<text class="code" x="343.3" y="1257.8" fill="#606366" stroke="#606366" stroke-width="0.3">120</text>
<text class="code" x="343.3" y="1293.8" fill="#606366" stroke="#606366" stroke-width="0.3">121</text>
<text x="407.5" y="389.5" font-size="20.02" fill="#c3c3c3" textLength="21.0" lengthAdjust="spacing" font-family="DejaVu Sans, sans-serif" stroke="#c3c3c3" stroke-width="0.7">@</text>
<text x="407.5" y="533.5" font-size="20.02" fill="#c3c3c3" textLength="21.0" lengthAdjust="spacing" font-family="DejaVu Sans, sans-serif" stroke="#c3c3c3" stroke-width="0.7">@</text>
<text x="407.5" y="677.5" font-size="20.02" fill="#c3c3c3" textLength="21.0" lengthAdjust="spacing" font-family="DejaVu Sans, sans-serif" stroke="#c3c3c3" stroke-width="0.7">@</text>
<path d="M450.5,200 h15 v10 l-7.5,7.5 l-7.5,-7.5 Z" fill="#313335" stroke="#606366" stroke-width="1.6"/>
<line x1="454.5" y1="206.5" x2="461.5" y2="206.5" stroke="#606366" stroke-width="1.6" />
<path d="M450.5,380 h15 v10 l-7.5,7.5 l-7.5,-7.5 Z" fill="#313335" stroke="#606366" stroke-width="1.6"/>
<line x1="454.5" y1="386.5" x2="461.5" y2="386.5" stroke="#606366" stroke-width="1.6" />
<path d="M450.5,524 h15 v10 l-7.5,7.5 l-7.5,-7.5 Z" fill="#313335" stroke="#606366" stroke-width="1.6"/>
<line x1="454.5" y1="530.5" x2="461.5" y2="530.5" stroke="#606366" stroke-width="1.6" />
<path d="M450.5,668 h15 v10 l-7.5,7.5 l-7.5,-7.5 Z" fill="#313335" stroke="#606366" stroke-width="1.6"/>
<line x1="454.5" y1="674.5" x2="461.5" y2="674.5" stroke="#606366" stroke-width="1.6" />
<path d="M450.5,704 h15 v10 l-7.5,7.5 l-7.5,-7.5 Z" fill="#313335" stroke="#606366" stroke-width="1.6"/>
<line x1="454.5" y1="710.5" x2="461.5" y2="710.5" stroke="#606366" stroke-width="1.6" />
<path d="M450.5,920 h15 v10 l-7.5,7.5 l-7.5,-7.5 Z" fill="#313335" stroke="#606366" stroke-width="1.6"/>
<line x1="454.5" y1="926.5" x2="461.5" y2="926.5" stroke="#606366" stroke-width="1.6" />
<path d="M450.5,992 h15 v10 l-7.5,7.5 l-7.5,-7.5 Z" fill="#313335" stroke="#606366" stroke-width="1.6"/>
<line x1="454.5" y1="998.5" x2="461.5" y2="998.5" stroke="#606366" stroke-width="1.6" />
<path d="M450.5,1028 h15 v10 l-7.5,7.5 l-7.5,-7.5 Z" fill="#313335" stroke="#606366" stroke-width="1.6"/>
<line x1="454.5" y1="1034.5" x2="461.5" y2="1034.5" stroke="#606366" stroke-width="1.6" />
<path d="M450.5,1208 h15 v10 l-7.5,7.5 l-7.5,-7.5 Z" fill="#313335" stroke="#606366" stroke-width="1.6"/>
<line x1="454.5" y1="1214.5" x2="461.5" y2="1214.5" stroke="#606366" stroke-width="1.6" />
<path d="M450.5,287 h15 v-10 l-7.5,-7.5 l-7.5,7.5 Z" fill="#313335" stroke="#606366" stroke-width="1.6"/>
<line x1="454.5" y1="280.5" x2="461.5" y2="280.5" stroke="#606366" stroke-width="1.6" />
<path d="M450.5,323 h15 v-10 l-7.5,-7.5 l-7.5,7.5 Z" fill="#313335" stroke="#606366" stroke-width="1.6"/>
<line x1="454.5" y1="316.5" x2="461.5" y2="316.5" stroke="#606366" stroke-width="1.6" />
<path d="M450.5,467 h15 v-10 l-7.5,-7.5 l-7.5,7.5 Z" fill="#313335" stroke="#606366" stroke-width="1.6"/>
<line x1="454.5" y1="460.5" x2="461.5" y2="460.5" stroke="#606366" stroke-width="1.6" />
<path d="M450.5,611 h15 v-10 l-7.5,-7.5 l-7.5,7.5 Z" fill="#313335" stroke="#606366" stroke-width="1.6"/>
<line x1="454.5" y1="604.5" x2="461.5" y2="604.5" stroke="#606366" stroke-width="1.6" />
<path d="M450.5,791 h15 v-10 l-7.5,-7.5 l-7.5,7.5 Z" fill="#313335" stroke="#606366" stroke-width="1.6"/>
<line x1="454.5" y1="784.5" x2="461.5" y2="784.5" stroke="#606366" stroke-width="1.6" />
<path d="M450.5,1115 h15 v-10 l-7.5,-7.5 l-7.5,7.5 Z" fill="#313335" stroke="#606366" stroke-width="1.6"/>
<line x1="454.5" y1="1108.5" x2="461.5" y2="1108.5" stroke="#606366" stroke-width="1.6" />
<circle cx="496.2" cy="554" r="10.2" fill="#f2a72f"/>
<path d="M488.5,560 h15.5 l-3.5,4.7 h-8.5 Z" fill="#f2a72f"/>
<rect x="492.2" y="566" width="9.6" height="2.2" fill="#d6d6d6"/>
<rect x="492.2" y="570" width="9.6" height="2.2" fill="#d6d6d6"/>
</g>
<rect x="490.5" y="497" width="1362" height="130" fill="none" rx="9" stroke="#fc1f1f" stroke-width="6"/>
<rect x="2817" y="431" width="15" height="107" fill="#4f4f4f" rx="7"/>
<rect x="332" y="1242" width="2506" height="45" fill="#313335"/>
<rect x="332" y="1242" width="2506" height="1.5" fill="#3b3d3f"/>
<text x="478" y="1274" font-size="23.02" fill="#bbbbbb" textLength="118" lengthAdjust="spacing" stroke="#bbbbbb" stroke-width="0.7">StringUtils</text>
<path d="M621.5,1259.5 l4.5,5.5 l-4.5,5.5" fill="none" stroke="#6b6e70" stroke-width="1.8"/>
<text x="643.5" y="1274" font-size="23.02" fill="#bbbbbb" textLength="273.5" lengthAdjust="spacing" stroke="#bbbbbb" stroke-width="0.7">tokenizeToStringArray()</text>
<rect x="332" y="1286" width="2506" height="2" fill="#2d2f30"/>
<text x="54" y="1323.6" font-size="24.02" fill="#bbbbbb" textLength="81" lengthAdjust="spacing" stroke="#bbbbbb" stroke-width="0.7">Debug:</text>
<g transform="translate(174.5,1308) scale(0.8)">
<path d="M0,22 C-2,8 10,0 24,0 C28,-1 31,-3 33,-6 C36,6 34,20 22,24 C14,27 6,26 0,22 Z" fill="#5a9b46"/>
<path d="M14,15 l6,-10 h12 l6,10 l-6,10 h-12 Z" fill="#9aa7b0"/>
<circle cx="26" cy="15" r="5.2" fill="none" stroke="#3c3f41" stroke-width="1.8"/>
<line x1="26" y1="8.5" x2="26" y2="14.5" stroke="#3c3f41" stroke-width="2" />
<circle cx="35" cy="23" r="4.6" fill="#1fe21a"/>
</g>
<text x="214" y="1323.6" font-size="24.32" fill="#bbbbbb" textLength="310" lengthAdjust="spacing" stroke="#bbbbbb" stroke-width="0.7">SpringbootShiroApplication</text>
<line x1="539" y1="1309.5" x2="553" y2="1323.5" stroke="#7a7e80" stroke-width="1.8" />
<line x1="539" y1="1323.5" x2="553" y2="1309.5" stroke="#7a7e80" stroke-width="1.8" />
<rect x="150" y="1336" width="426" height="5.5" fill="#747a80"/>
<rect x="42" y="1341" width="2796" height="1.6" fill="#323232"/>
<path d="M2757.3,1304.7 L2757.5,1301.2 L2762.5,1301.2 L2762.7,1304.7 L2766.3,1306.7 L2769.4,1305.2 L2771.9,1309.5 L2769.0,1311.4 L2769.0,1315.6 L2771.9,1317.5 L2769.4,1321.8 L2766.3,1320.3 L2762.7,1322.3 L2762.5,1325.8 L2757.5,1325.8 L2757.3,1322.3 L2753.7,1320.3 L2750.6,1321.8 L2748.1,1317.5 L2751.0,1315.6 L2751.0,1311.4 L2748.1,1309.5 L2750.6,1305.2 L2753.7,1306.7 Z" fill="#afb1b3" stroke="#afb1b3" stroke-width="1.6" stroke-linejoin="round"/>
<circle cx="2760" cy="1313.5" r="9.55" fill="#afb1b3"/>
<circle cx="2760" cy="1313.5" r="4.25" fill="#3c3f41"/>
<rect x="2799.5" y="1311.5" width="25" height="4.4" fill="#afb1b3"/>
<rect x="98" y="1342.5" width="2" height="352" fill="#323232"/>
<path d="M75,1364.5 h-4.5 a9.6,9.6 0 1 0 0,19.2" fill="none" stroke="#499c54" stroke-width="4.2"/>
<path d="M74,1356 l11,8.5 l-11,8.5 Z" fill="#499c54"/>
<rect x="72" y="1374.5" width="10" height="10" fill="#afb1b3"/>
<line x1="50" y1="1403" x2="90" y2="1403" stroke="#515151" stroke-width="2" />
<rect x="59.5" y="1424.5" width="6" height="21.5" fill="#499c54"/>
<path d="M69.5,1424.5 l14.5,10.7 l-14.5,10.8 Z" fill="#499c54"/>
<rect x="62.3" y="1476" width="6.7" height="22" fill="#5c5f61"/>
<rect x="71.6" y="1476" width="6.7" height="22" fill="#5c5f61"/>
<rect x="60" y="1530" width="20" height="20" fill="#c75450"/>
<line x1="50" y1="1572.5" x2="90" y2="1572.5" stroke="#515151" stroke-width="2" />
<circle cx="76" cy="1601" r="8.5" fill="#cc5555"/>
<circle cx="67.2" cy="1609" r="10" fill="#cc5555" stroke="#3c3f41" stroke-width="2"/>
<path d="M64.5,1670 l5,5 l-5,5 M72.5,1670 l5,5 l-5,5" fill="none" stroke="#9da0a2" stroke-width="1.6"/>
<text x="126" y="1378" font-size="22.32" fill="#bbbbbb" textLength="103" lengthAdjust="spacing" stroke="#bbbbbb" stroke-width="0.7">Debugger</text>
<rect x="100" y="1393" width="154" height="5" fill="#747a80"/>
<rect x="280" y="1360" width="23.8" height="19.8" fill="#afb1b3"/>
<path d="M285.5,1364 l6.5,5 l-6.5,5" fill="none" stroke="#3c3f41" stroke-width="2.6"/>
<circle cx="301" cy="1379" r="7.5" fill="#f2a72f"/>
<path d="M301,1374.5 v8 M297.5,1379.5 l3.5,3.5 l3.5,-3.5" fill="none" stroke="#3c3f41" stroke-width="1.6"/>
<text x="316" y="1378" font-size="22.32" fill="#bbbbbb" textLength="82.5" lengthAdjust="spacing" stroke="#bbbbbb" stroke-width="0.7">Console</text>
<path d="M447,1381 L457,1362 L466,1381" fill="none" stroke="#b1592c" stroke-width="2.6"/>
<circle cx="457" cy="1361" r="5" fill="#b1592c"/>
<circle cx="445.5" cy="1380" r="5" fill="#b1592c"/>
<circle cx="464" cy="1380" r="5" fill="#b1592c"/>
<line x1="441" y1="1369" x2="444" y2="1376" stroke="#b1592c" stroke-width="2" />
<line x1="468" y1="1369" x2="466" y2="1375" stroke="#b1592c" stroke-width="2" />
<text x="478" y="1378" font-size="22.32" fill="#bbbbbb" textLength="101.5" lengthAdjust="spacing" stroke="#bbbbbb" stroke-width="0.7">Endpoints</text>
<rect x="610" y="1358" width="24" height="4.4" fill="#afb1b3"/>
<rect x="610" y="1366.5" width="24" height="5.5" fill="#3592c4"/>
<rect x="610" y="1376" width="24" height="4.4" fill="#afb1b3"/>
<line x1="655" y1="1349" x2="655" y2="1387" stroke="#515151" stroke-width="2" />
<path d="M675.5,1368.5 L687,1357 L695.5,1365.5" fill="none" stroke="#3592c4" stroke-width="4"/>
<path d="M700.5,1359.5 v13 h-13 Z" fill="#3592c4"/>
<rect x="676" y="1376.4" width="24.5" height="3.8" fill="#afb1b3"/>
<line x1="740" y1="1354" x2="740" y2="1366" stroke="#3592c4" stroke-width="4" />
<path d="M730.7,1364.5 h18.6 l-9.3,9 Z" fill="#3592c4"/>
<rect x="728" y="1376.4" width="24" height="3.8" fill="#afb1b3"/>
<line x1="792" y1="1354" x2="792" y2="1366" stroke="#cc5555" stroke-width="4" />
<path d="M782.7,1364.5 h18.6 l-9.3,9 Z" fill="#cc5555"/>
<rect x="780" y="1376.4" width="24" height="3.8" fill="#afb1b3"/>
<line x1="844" y1="1361" x2="844" y2="1374" stroke="#3592c4" stroke-width="4" />
<path d="M834.7,1364 h18.6 l-9.3,-9.5 Z" fill="#3592c4"/>
<rect x="832" y="1376.4" width="24" height="3.8" fill="#afb1b3"/>
<path d="M883.5,1356 l12.5,12 M896,1356 l-12.5,12" fill="none" stroke="#cc5555" stroke-width="4"/>
<path d="M898.5,1363.8 h7.6 v14 h-14 v-7" fill="none" stroke="#afb1b3" stroke-width="3.6"/>
<line x1="936" y1="1357" x2="946.5" y2="1367.5" stroke="#3592c4" stroke-width="4" />
<path d="M950.2,1358 v12.8 h-12.8 Z" fill="#3592c4"/>
<path d="M952,1366.8 h10 M957,1366.8 v14.4 M952,1381.2 h10" fill="none" stroke="#afb1b3" stroke-width="1.6"/>
<line x1="981" y1="1349" x2="981" y2="1387" stroke="#515151" stroke-width="2" />
<rect x="1002" y="1355.6" width="24" height="24.4" fill="#afb1b3"/>
<rect x="1005.6" y="1359.8" width="16.8" height="4.2" fill="#3c3f41"/>
<rect x="1005.8" y="1366.5" width="4.9" height="3.7" fill="#3c3f41"/>
<rect x="1011.55" y="1366.5" width="4.9" height="3.7" fill="#3c3f41"/>
<rect x="1017.3" y="1366.5" width="4.9" height="3.7" fill="#3c3f41"/>
<rect x="1005.8" y="1372.3" width="4.9" height="3.7" fill="#3c3f41"/>
<rect x="1011.55" y="1372.3" width="4.9" height="3.7" fill="#3c3f41"/>
<rect x="1017.3" y="1372.3" width="4.9" height="3.7" fill="#3c3f41"/>
<rect x="1054" y="1360" width="9" height="3" fill="#5c5f61"/>
<rect x="1067" y="1360" width="11" height="3" fill="#5c5f61"/>
<rect x="1054" y="1368" width="9" height="3" fill="#5c5f61"/>
<rect x="1067" y="1368" width="11" height="3" fill="#5c5f61"/>
<rect x="1054" y="1376" width="9" height="3" fill="#5c5f61"/>
<rect x="1067" y="1376" width="11" height="3" fill="#5c5f61"/>
<line x1="1070" y1="1357" x2="1062" y2="1381" stroke="#5c5f61" stroke-width="2.4" />
<rect x="100" y="1396.5" width="2738" height="1.6" fill="#323232"/>
<rect x="2798" y="1358.5" width="11" height="9" fill="#afb1b3"/>
<rect x="2811" y="1358.5" width="11" height="9" fill="#afb1b3"/>
<rect x="2798" y="1369.5" width="24" height="8.5" fill="#afb1b3"/>
<path d="M2815.5,1380 h12 l-6,6 Z" fill="#afb1b3"/>
<text x="126" y="1432" font-size="22.32" fill="#bbbbbb" textLength="73.5" lengthAdjust="spacing" stroke="#bbbbbb" stroke-width="0.7">Frames</text>
<rect x="100" y="1447.5" width="126" height="4.5" fill="#747a80"/>
<text x="250.5" y="1432" font-size="22.32" fill="#bbbbbb" textLength="83.0" lengthAdjust="spacing" stroke="#bbbbbb" stroke-width="0.7">Threads</text>
<rect x="100" y="1451" width="2738" height="1.6" fill="#323232"/>
<rect x="1038" y="1398" width="2" height="296" fill="#323232"/>
<rect x="106" y="1458.5" width="762" height="47" fill="none" rx="6" stroke="#5e6366" stroke-width="2"/>
<path d="M123.5,1480 l9,10 l16,-18" fill="none" stroke="#c75f24" stroke-width="5"/>
<text x="158" y="1491" font-size="25.72" fill="#bbbbbb" textLength="649" lengthAdjust="spacing" stroke="#bbbbbb" stroke-width="0.7">"http-nio-8080-exec-1"…n group "main": RUNNING</text>
<path d="M835,1479 h19 l-9.5,9.5 Z" fill="#9da0a2"/>
<line x1="904" y1="1472" x2="904" y2="1494" stroke="#5c5f61" stroke-width="3.2" />
<path d="M895,1481 l9,-9 l9,9" fill="none" stroke="#5c5f61" stroke-width="3.2"/>
<line x1="955.5" y1="1471" x2="955.5" y2="1493" stroke="#afb1b3" stroke-width="3.2" />
<path d="M946.5,1484 l9,9 l9,-9" fill="none" stroke="#afb1b3" stroke-width="3.2"/>
<path d="M996,1471 h25 l-9.5,11 v12 h-6 v-12 Z" fill="#afb1b3"/>
<clipPath id="cpFr"><rect x="100" y="1511" width="938" height="182"/></clipPath>
<g clip-path="url(#cpFr)">
<rect x="100" y="1511.5" width="938" height="4.5" fill="#2d2f30"/>
<rect x="100" y="1516" width="938" height="40" fill="#2f65ca"/>
<rect x="100" y="1556" width="938" height="140" fill="#4e4a40"/>
<text x="132" y="1545.5" font-size="25.72" fill="#ffffff" textLength="374" lengthAdjust="spacing" stroke="#ffffff" stroke-width="0.7">doMatch:116, AntPathMatcher</text>
<text x="515" y="1545.5" font-size="25.72" fill="#ffffff" textLength="275.5" lengthAdjust="spacing" font-style="italic" stroke="#ffffff" stroke-width="0.7">(org.apache.shiro.util)</text>
<text x="132" y="1585.5" font-size="25.72" fill="#808080" textLength="334" lengthAdjust="spacing" stroke="#808080" stroke-width="0.7">match:90, AntPathMatcher</text>
<text x="475.5" y="1585.5" font-size="25.72" fill="#808080" textLength="275.5" lengthAdjust="spacing" font-style="italic" stroke="#808080" stroke-width="0.7">(org.apache.shiro.util)</text>
<text x="132" y="1625.5" font-size="25.72" fill="#808080" textLength="364" lengthAdjust="spacing" stroke="#808080" stroke-width="0.7">matches:86, AntPathMatcher</text>
<text x="505" y="1625.5" font-size="25.72" fill="#808080" textLength="275.5" lengthAdjust="spacing" font-style="italic" stroke="#808080" stroke-width="0.7">(org.apache.shiro.util)</text>
<text x="132" y="1665.5" font-size="25.72" fill="#808080" textLength="644" lengthAdjust="spacing" stroke="#808080" stroke-width="0.7">pathMatches:152, PathMatchingFilterChainResolver</text>
<text x="785.5" y="1665.5" font-size="25.72" fill="#808080" textLength="402.5" lengthAdjust="spacing" font-style="italic" stroke="#808080" stroke-width="0.7">(org.apache.shiro.web.filter.mgt)</text>
<text x="132" y="1705.5" font-size="25.72" fill="#808080" textLength="605" lengthAdjust="spacing" stroke="#808080" stroke-width="0.7">getChain:123, PathMatchingFilterChainResolver</text>
<text x="746.5" y="1705.5" font-size="25.72" fill="#808080" textLength="402.5" lengthAdjust="spacing" font-style="italic" stroke="#808080" stroke-width="0.7">(org.apache.shiro.web.filter.mgt)</text>
</g>
<text x="1065" y="1432" font-size="22.32" fill="#bbbbbb" textLength="97" lengthAdjust="spacing" stroke="#bbbbbb" stroke-width="0.7">Variables</text>
<rect x="1088" y="1452.5" width="2" height="242" fill="#323232"/>
<line x1="1053" y1="1477.5" x2="1074" y2="1477.5" stroke="#afb1b3" stroke-width="3.4" />
<line x1="1063.5" y1="1467" x2="1063.5" y2="1488" stroke="#afb1b3" stroke-width="3.4" />
<line x1="1053.5" y1="1529.5" x2="1074" y2="1529.5" stroke="#5c5f61" stroke-width="3.4" />
<path d="M1052,1588 h24 l-12,-12 Z" fill="#5c5f61"/>
<path d="M1052,1627 h24 l-12,12 Z" fill="#5c5f61"/>
<path d="M1057.5,1674 l5,5 l-5,5 M1065.5,1674 l5,5 l-5,5" fill="none" stroke="#9da0a2" stroke-width="1.6"/>
<clipPath id="cpVar"><rect x="1090" y="1452" width="1638" height="242"/></clipPath>
<g clip-path="url(#cpVar)">
<path d="M1095.3,1464.1 l15.7,9 l-15.7,9 Z" fill="#9da0a2"/>
<rect x="1136" y="1461.9" width="20" height="4.9" fill="#b0863c"/>
<rect x="1136" y="1470.45" width="20" height="4.9" fill="#b0863c"/>
<rect x="1136" y="1479.0" width="20" height="4.9" fill="#b0863c"/>
<text x="1168" y="1483.5" font-size="25.72" fill="#f8878a" textLength="45.5" lengthAdjust="spacing" stroke="#f8878a" stroke-width="0.7">this</text>
<text x="1223.0" y="1483.5" font-size="25.72" fill="#bbbbbb" textLength="15.5" lengthAdjust="spacing" stroke="#bbbbbb" stroke-width="0.7">=</text>
<text x="1247" y="1483.5" font-size="25.72" fill="#8c8c8c" textLength="309" lengthAdjust="spacing" stroke="#8c8c8c" stroke-width="0.7">{AntPathMatcher@5852}</text>
<path d="M1095.3,1504.1 l15.7,9 l-15.7,9 Z" fill="#9da0a2"/>
<circle cx="1146" cy="1514.5" r="14" fill="#b4873c"/>
<text x="1146" y="1520.0" font-size="21.5" fill="#45351a" font-weight="normal" text-anchor="middle">p</text>
<text x="1168" y="1523.5" font-size="25.72" fill="#f8878a" textLength="91" lengthAdjust="spacing" stroke="#f8878a" stroke-width="0.7">pattern</text>
<text x="1268.5" y="1523.5" font-size="25.72" fill="#bbbbbb" textLength="15.5" lengthAdjust="spacing" stroke="#bbbbbb" stroke-width="0.7">=</text>
<text x="1293" y="1523.5" font-size="25.72" fill="#6a8759" textLength="124" lengthAdjust="spacing" stroke="#6a8759" stroke-width="0.7">"/admin/*"</text>
<path d="M1095.3,1544.1 l15.7,9 l-15.7,9 Z" fill="#9da0a2"/>
<circle cx="1146" cy="1554.5" r="14" fill="#b4873c"/>
<text x="1146" y="1560.0" font-size="21.5" fill="#45351a" font-weight="normal" text-anchor="middle">p</text>
<text x="1168" y="1563.5" font-size="25.72" fill="#f8878a" textLength="55" lengthAdjust="spacing" stroke="#f8878a" stroke-width="0.7">path</text>
<text x="1232.5" y="1563.5" font-size="25.72" fill="#bbbbbb" textLength="15.5" lengthAdjust="spacing" stroke="#bbbbbb" stroke-width="0.7">=</text>
<text x="1257" y="1563.5" font-size="25.72" fill="#6a8759" textLength="120.5" lengthAdjust="spacing" stroke="#6a8759" stroke-width="0.7">"/admin/ "</text>
<circle cx="1146" cy="1594.5" r="14" fill="#b4873c"/>
<text x="1146" y="1600.0" font-size="21.5" fill="#45351a" font-weight="normal" text-anchor="middle">p</text>
<text x="1168" y="1603.5" font-size="25.72" fill="#f8878a" textLength="112.5" lengthAdjust="spacing" stroke="#f8878a" stroke-width="0.7">fullMatch</text>
<text x="1290.0" y="1603.5" font-size="25.72" fill="#bbbbbb" textLength="15.5" lengthAdjust="spacing" stroke="#bbbbbb" stroke-width="0.7">=</text>
<text x="1314" y="1603.5" font-size="25.72" fill="#bbbbbb" textLength="50.5" lengthAdjust="spacing" stroke="#bbbbbb" stroke-width="0.7">true</text>
<path d="M1095.3,1624.1 l15.7,9 l-15.7,9 Z" fill="#9da0a2"/>
<rect x="1142" y="1621.8" width="16" height="6.2" fill="#3d98b8"/>
<text x="1132.3" y="1628.4" font-size="10.5" fill="#afb1b3" font-weight="normal" font-family="DejaVu Sans, sans-serif">1</text>
<rect x="1142" y="1631.7" width="16" height="6.2" fill="#3d98b8"/>
<text x="1132.3" y="1638.3000000000002" font-size="10.5" fill="#afb1b3" font-weight="normal" font-family="DejaVu Sans, sans-serif">2</text>
<rect x="1142" y="1641.6" width="16" height="6.2" fill="#3d98b8"/>
<text x="1132.3" y="1648.2" font-size="10.5" fill="#afb1b3" font-weight="normal" font-family="DejaVu Sans, sans-serif">3</text>
<text x="1168" y="1643.5" font-size="25.72" fill="#f8878a" textLength="99.5" lengthAdjust="spacing" stroke="#f8878a" stroke-width="0.7">pattDirs</text>
<text x="1277.0" y="1643.5" font-size="25.72" fill="#bbbbbb" textLength="15.5" lengthAdjust="spacing" stroke="#bbbbbb" stroke-width="0.7">=</text>
<text x="1301" y="1643.5" font-size="25.72" fill="#8c8c8c" textLength="217" lengthAdjust="spacing" stroke="#8c8c8c" stroke-width="0.7">{String[2]@5869}</text>
<path d="M1095.3,1664.1 l15.7,9 l-15.7,9 Z" fill="#9da0a2"/>
<rect x="1142" y="1661.8" width="16" height="6.2" fill="#3d98b8"/>
<text x="1132.3" y="1668.4" font-size="10.5" fill="#afb1b3" font-weight="normal" font-family="DejaVu Sans, sans-serif">1</text>
<rect x="1142" y="1671.7" width="16" height="6.2" fill="#3d98b8"/>
<text x="1132.3" y="1678.3000000000002" font-size="10.5" fill="#afb1b3" font-weight="normal" font-family="DejaVu Sans, sans-serif">2</text>
<rect x="1142" y="1681.6" width="16" height="6.2" fill="#3d98b8"/>
<text x="1132.3" y="1688.2" font-size="10.5" fill="#afb1b3" font-weight="normal" font-family="DejaVu Sans, sans-serif">3</text>
<text x="1168" y="1683.5" font-size="25.72" fill="#f8878a" textLength="105.5" lengthAdjust="spacing" stroke="#f8878a" stroke-width="0.7">pathDirs</text>
<text x="1283.0" y="1683.5" font-size="25.72" fill="#bbbbbb" textLength="15.5" lengthAdjust="spacing" stroke="#bbbbbb" stroke-width="0.7">=</text>
<text x="1307" y="1683.5" font-size="25.72" fill="#8c8c8c" textLength="212.5" lengthAdjust="spacing" stroke="#8c8c8c" stroke-width="0.7">{String[1]@5872}</text>
</g>
<rect x="2728" y="1398" width="2" height="296" fill="#323232"/>
<path d="M2784,1425.5 h10 l-5,5.5 Z" fill="#afb1b3"/>
<rect x="2798" y="1420.0" width="16.5" height="2" fill="#afb1b3"/>
<rect x="2798" y="1424.7" width="16.5" height="2" fill="#afb1b3"/>
<rect x="2798" y="1429.4" width="16.5" height="2" fill="#afb1b3"/>
<rect x="2798" y="1434.1" width="16.5" height="2" fill="#afb1b3"/>
<text x="2818" y="1435" font-size="16.02" fill="#afb1b3" stroke="#afb1b3" stroke-width="0.7">2</text>
<rect x="2730" y="1447.5" width="46" height="4.5" fill="#747a80"/>
<rect x="2736.5" y="1458.5" width="37" height="47" fill="#45494a" rx="6" stroke="#646464" stroke-width="2"/>
<circle cx="2761" cy="1479" r="8.5" fill="none" stroke="#7f8b91" stroke-width="2.2"/>
<line x1="2767" y1="1485.5" x2="2773" y2="1492" stroke="#7f8b91" stroke-width="2.2" />
<path d="M2804.6,1473.2 L2804.8,1470.2 L2809.2,1470.2 L2809.4,1473.2 L2812.5,1475.0 L2815.2,1473.7 L2817.4,1477.5 L2814.9,1479.2 L2814.9,1482.8 L2817.4,1484.5 L2815.2,1488.3 L2812.5,1487.0 L2809.4,1488.8 L2809.2,1491.8 L2804.8,1491.8 L2804.6,1488.8 L2801.5,1487.0 L2798.8,1488.3 L2796.6,1484.5 L2799.1,1482.8 L2799.1,1479.2 L2796.6,1477.5 L2798.8,1473.7 L2801.5,1475.0 Z" fill="#afb1b3" stroke="#afb1b3" stroke-width="1.6" stroke-linejoin="round"/>
<circle cx="2807" cy="1481" r="8.440000000000001" fill="#afb1b3"/>
<circle cx="2807" cy="1481" r="3.74" fill="#3c3f41"/>
<path d="M2811.5,1488 h12 l-6,6 Z" fill="#d8d8d8"/>
<rect x="2730" y="1512" width="108" height="48" fill="#46494b"/>
<line x1="2758.5" y1="1514" x2="2758.5" y2="1560" stroke="#2b2b2b" stroke-width="2" />
<text x="2746.5" y="1544" font-size="21.02" fill="#bbbbbb" stroke="#bbbbbb" stroke-width="0.7">..</text>
<text x="2776" y="1544" font-size="22.32" fill="#bbbbbb" textLength="60" lengthAdjust="spacing" stroke="#bbbbbb" stroke-width="0.7">Count</text>
<path d="M2828,1605 v15 h8" fill="none" stroke="#589df6" stroke-width="2.4"/>
<rect x="2080" y="1551" width="752" height="136" fill="#000000" rx="6" opacity="0.10"/>
<rect x="2083" y="1552.5" width="746" height="130" fill="#000000" rx="4" opacity="0.16"/>
<rect x="2086" y="1554" width="740" height="124" fill="#4e5052" rx="2"/>
<circle cx="2122" cy="1592" r="14" fill="#3592c4"/>
<rect x="2120" y="1589.5" width="4" height="10" fill="#35464f"/>
<rect x="2120" y="1583.5" width="4" height="4" fill="#35464f"/>
<text x="2150" y="1602" font-size="26.02" fill="#bbbbbb" textLength="592" lengthAdjust="spacing" stroke="#bbbbbb" stroke-width="0.7">Project configurations files can be added to Git</text>
<text x="2150" y="1644" font-size="26.02" fill="#589df6" textLength="126" lengthAdjust="spacing" stroke="#589df6" stroke-width="0.7">View Files</text>
<text x="2308" y="1644" font-size="26.02" fill="#589df6" textLength="144" lengthAdjust="spacing" stroke="#589df6" stroke-width="0.7">Always Add</text>
<text x="2484" y="1644" font-size="26.02" fill="#589df6" textLength="201.5" lengthAdjust="spacing" stroke="#589df6" stroke-width="0.7">Don't Ask Again</text>
<rect x="0" y="1694" width="2878" height="2" fill="#323232"/>
<rect x="0" y="1696" width="2878" height="40" fill="#3c3f41"/>
<rect x="1458" y="1696" width="170" height="40" fill="#2d2f30"/>
<rect x="0" y="1736" width="2878" height="1.6" fill="#4a4744"/>
<path d="M71.5,1706 v22 M71.5,1718 h12.5 v-8" fill="none" stroke="#afb1b3" stroke-width="3.2"/>
<path d="M77.5,1713.5 l6.5,-7.5 l6.5,7.5 Z" fill="#afb1b3"/>
<text x="100" y="1724" font-size="21.02" fill="#bbbbbb" textLength="181" lengthAdjust="spacing" stroke="#bbbbbb" stroke-width="0.7">9: Version Control</text>
<rect x="100.5" y="1727.5" width="13.0" height="1.8" fill="#bbbbbb"/>
<rect x="330" y="1707" width="22" height="19" fill="#afb1b3"/>
<path d="M334,1711 l6,5 l-6,5" fill="none" stroke="#3c3f41" stroke-width="2.2"/>
<rect x="341" y="1720" width="8" height="2.2" fill="#3c3f41"/>
<text x="362.5" y="1724" font-size="21.02" fill="#bbbbbb" textLength="86.5" lengthAdjust="spacing" stroke="#bbbbbb" stroke-width="0.7">Terminal</text>
<path d="M491,1712 l7,-7 l6.5,6.5 l-2.5,2.5 l13,11 l-4,4.5 l-12,-12.5 l-3,3 Z" fill="#afb1b3"/>
<text x="524" y="1724" font-size="21.02" fill="#bbbbbb" textLength="51.5" lengthAdjust="spacing" stroke="#bbbbbb" stroke-width="0.7">Build</text>
<circle cx="632" cy="1717" r="11.5" fill="none" stroke="#6e7173" stroke-width="2.4"/>
<path d="M632,1717 v-13.5 a13.5,13.5 0 0 1 13.5,13.5 Z" fill="#3c3f41"/>
<path d="M634.5,1714.5 v-9 a9,9 0 0 1 9,9 Z" fill="none" stroke="#6e7173" stroke-width="2"/>
<text x="656" y="1724" font-size="21.02" fill="#bbbbbb" textLength="86" lengthAdjust="spacing" stroke="#bbbbbb" stroke-width="0.7">Statistic</text>
<path d="M788,1706 h20 v6 v12 h-20 Z" fill="#afb1b3"/>
<rect x="795.5" y="1714.5" width="17" height="15.5" fill="#3c3f41"/>
<rect x="797.3" y="1716.3" width="13.6" height="12" fill="#afb1b3"/>
<text x="798.3" y="1727" font-size="10" fill="#3c3f41" textLength="11.7" lengthAdjust="spacing" font-weight="bold">EE</text>
<text x="820" y="1724" font-size="21.02" fill="#bbbbbb" textLength="158.5" lengthAdjust="spacing" stroke="#bbbbbb" stroke-width="0.7">Java Enterprise</text>
<path d="M1025,1724 c-1,-10 8,-15 17,-15 c3,-1 5,-2.5 6.5,-4.5 c2.5,9 1,19 -8,22 c-6,2 -11.5,1 -15.5,-2.5 Z" fill="#afb1b3"/>
<text x="1058" y="1724" font-size="21.02" fill="#bbbbbb" textLength="67" lengthAdjust="spacing" stroke="#bbbbbb" stroke-width="0.7">Spring</text>
<circle cx="1179" cy="1717" r="10.5" fill="none" stroke="#afb1b3" stroke-width="2.6"/>
<path d="M1171,1711 q6,1 7,6 q1,5 -4,8 M1183,1707 q-2,5 3,7 q3,1 3,5" fill="none" stroke="#afb1b3" stroke-width="2.4"/>
<text x="1199.5" y="1724" font-size="21.02" fill="#bbbbbb" textLength="102.5" lengthAdjust="spacing" stroke="#bbbbbb" stroke-width="0.7">Endpoints</text>
<path d="M1346,1706 l16,11 l-16,11 Z" fill="#afb1b3"/>
<text x="1376" y="1724" font-size="21.02" fill="#bbbbbb" textLength="65" lengthAdjust="spacing" stroke="#bbbbbb" stroke-width="0.7">4: Run</text>
<rect x="1376.5" y="1727.5" width="13.0" height="1.8" fill="#bbbbbb"/>
<ellipse cx="1494" cy="1720" rx="8" ry="10.5" fill="#afb1b3"/>
<line x1="1483" y1="1714" x2="1505" y2="1714" stroke="#afb1b3" stroke-width="2.4" />
<line x1="1482.5" y1="1720" x2="1505.5" y2="1720" stroke="#afb1b3" stroke-width="2.4" />
<line x1="1483" y1="1726" x2="1505" y2="1726" stroke="#afb1b3" stroke-width="2.4" />
<path d="M1488,1707 l3,4 M1500,1707 l-3,4" fill="none" stroke="#afb1b3" stroke-width="2.4"/>
<circle cx="1502.5" cy="1727.5" r="4.6" fill="#1fe21a"/>
<text x="1514" y="1724" font-size="21.02" fill="#e8e8e8" textLength="93.5" lengthAdjust="spacing" stroke="#e8e8e8" stroke-width="0.7">5: Debug</text>
<rect x="1514.5" y="1727.5" width="13.0" height="1.8" fill="#e8e8e8"/>
<rect x="1653.5" y="1708" width="4" height="4" fill="#afb1b3"/>
<rect x="1660" y="1708" width="15" height="4" fill="#afb1b3"/>
<rect x="1653.5" y="1715" width="4" height="4" fill="#afb1b3"/>
<rect x="1660" y="1715" width="15" height="4" fill="#afb1b3"/>
<rect x="1653.5" y="1722" width="4" height="4" fill="#afb1b3"/>
<rect x="1660" y="1722" width="15" height="4" fill="#afb1b3"/>
<text x="1683.5" y="1724" font-size="21.02" fill="#bbbbbb" textLength="89.0" lengthAdjust="spacing" stroke="#bbbbbb" stroke-width="0.7">6: TODO</text>
<rect x="1684" y="1727.5" width="13" height="1.8" fill="#bbbbbb"/>
<circle cx="2697" cy="1717.5" r="13" fill="#4ea35a"/>
<rect x="2697" y="1717.5" width="13" height="13" fill="#4ea35a"/>
<text x="2697" y="1725.5" font-size="20" fill="#ffffff" font-weight="bold" text-anchor="middle">3</text>
<text x="2719" y="1724" font-size="21.02" fill="#bbbbbb" textLength="98" lengthAdjust="spacing" stroke="#bbbbbb" stroke-width="0.7">Event Log</text>
<rect x="0" y="1738" width="2878" height="40" fill="#3c3f41"/>
<rect x="17" y="1749" width="18" height="17" fill="none" stroke="#afb1b3" stroke-width="1.8"/>
<path d="M13,1753 v18 h18.5" fill="none" stroke="#afb1b3" stroke-width="1.8"/>
<text x="62" y="1768" font-size="21.02" fill="#bbbbbb" textLength="397.5" lengthAdjust="spacing" stroke="#bbbbbb" stroke-width="0.7">All files are up-to-date (9 minutes ago)</text>
<text x="2278.5" y="1765.8" font-size="21.02" fill="#bbbbbb" textLength="74.5" lengthAdjust="spacing" stroke="#bbbbbb" stroke-width="0.7">4 chars</text>
<text x="2383.5" y="1765.8" font-size="21.02" fill="#bbbbbb" textLength="68.5" lengthAdjust="spacing" stroke="#bbbbbb" stroke-width="0.7">101:59</text>
<text x="2476.5" y="1765.8" font-size="21.02" fill="#787878" textLength="23.5" lengthAdjust="spacing" stroke="#787878" stroke-width="0.7">LF</text>
<text x="2524" y="1765.8" font-size="21.02" fill="#787878" textLength="65.5" lengthAdjust="spacing" stroke="#787878" stroke-width="0.7">UTF-8</text>
<text x="2614" y="1765.8" font-size="21.02" fill="#bbbbbb" textLength="90" lengthAdjust="spacing" stroke="#bbbbbb" stroke-width="0.7">Git: main</text>
<path d="M2731,1750 h14 v14 h6 v6 h-22 l6,-6 l-4,-6 Z" fill="#5a5c5e"/>
<ellipse cx="2786" cy="1757" rx="14.5" ry="7" fill="#b4b6b8"/>
<circle cx="2779" cy="1754" r="5" fill="#b4b6b8"/>
<circle cx="2790" cy="1752" r="5.5" fill="#b4b6b8"/>
<path d="M2795.4,1761.9 L2795.6,1759.9 L2798.4,1759.9 L2798.6,1761.9 L2800.6,1763.1 L2802.4,1762.2 L2803.8,1764.7 L2802.2,1765.8 L2802.2,1768.2 L2803.8,1769.3 L2802.4,1771.8 L2800.6,1770.9 L2798.6,1772.1 L2798.4,1774.1 L2795.6,1774.1 L2795.4,1772.1 L2793.4,1770.9 L2791.6,1771.8 L2790.2,1769.3 L2791.8,1768.2 L2791.8,1765.8 L2790.2,1764.7 L2791.6,1762.2 L2793.4,1763.1 Z" fill="#b4b6b8" stroke="#b4b6b8" stroke-width="1.6" stroke-linejoin="round"/>
<circle cx="2797" cy="1767" r="5.628" fill="#b4b6b8"/>
<circle cx="2797" cy="1767" r="2.4480000000000004" fill="#3c3f41"/>
<path d="M2852,1747 h-12 a13,13 0 0 0 -13,13 v0 a13,13 0 0 0 13,13 h6" fill="none" stroke="#8fa4b3" stroke-width="1.6"/>
<circle cx="2841" cy="1753" r="6.5" fill="#8fa4b3" opacity="0.8"/>
<path d="M2848,1757 h6" fill="none" stroke="#8fa4b3" stroke-width="1.6"/>
<circle cx="2748.3" cy="1749" r="17" fill="none" stroke="#f0f0f0" stroke-width="1.3"/>
<path d="M2741.5,1765 a12.5,12.5 0 0 1 21,-17.5 a12.5,12.5 0 0 1 2.5,9.5 Z" fill="#dcdcdc"/>
<path d="M2751,1766 l3.5,-13 l8,8.5 Z" fill="#3c3f41"/>
<path d="M2745.5,1743 l1.5,3 l3,0.5 l-2.3,2 l0.7,3 l-2.9,-1.6 l-2.9,1.6 l0.7,-3 l-2.3,-2 l3,-0.5 Z" fill="#e6e6e6"/>
<text x="2774" y="1756" font-size="22" fill="none" stroke="#ececec" stroke-width="1" textLength="75" lengthAdjust="spacingAndGlyphs">Seebug</text>
<g transform="translate(27.5,151) rotate(-90)">
<text x="0" y="0" font-size="21.02" fill="#e8e8e8" textLength="93" lengthAdjust="spacing" stroke="#e8e8e8" stroke-width="0.7">1: Project</text>
<rect x="0.5" y="3.5" width="13" height="1.8" fill="#e8e8e8"/>
</g>
<path d="M10,162 h9.2 l3.5,2.7 H32 V179 H10 Z" fill="#b4b6b8"/>
<g transform="translate(27.5,1320) rotate(-90)">
<text x="0" y="0" font-size="21.02" fill="#bbbbbb" textLength="120.5" lengthAdjust="spacing" stroke="#bbbbbb" stroke-width="0.7">2: Favorites</text>
<rect x="0.5" y="3.5" width="13" height="1.8" fill="#bbbbbb"/>
</g>
<path d="M20.8,1329 l3.9,8.6 l9.3,1 l-7,6.3 l2,9.2 l-8.2,-4.7 l-8.2,4.7 l2,-9.2 l-7,-6.3 l9.3,-1 Z" fill="#afb1b3"/>
<g transform="translate(27.5,1441) rotate(-90)">
<text x="0" y="0" font-size="21.02" fill="#bbbbbb" textLength="43.5" lengthAdjust="spacing" stroke="#bbbbbb" stroke-width="0.7">Web</text>
</g>
<circle cx="20.8" cy="1464.5" r="10.5" fill="none" stroke="#afb1b3" stroke-width="2.8"/>
<path d="M12.5,1458.5 q6,1 7,6 q1,5 -4,8 M24.5,1454.5 q-2,5 3,7 q3,1 3,5" fill="none" stroke="#afb1b3" stroke-width="2.4"/>
<g transform="translate(27.5,1638) rotate(-90)">
<text x="0" y="0" font-size="21.02" fill="#bbbbbb" textLength="119.5" lengthAdjust="spacing" stroke="#bbbbbb" stroke-width="0.7">7: Structure</text>
<rect x="0.5" y="3.5" width="13" height="1.8" fill="#bbbbbb"/>
</g>
<rect x="21.5" y="1650.5" width="8.5" height="8.5" fill="#afb1b3"/>
<rect x="12" y="1660" width="8.5" height="8.5" fill="#afb1b3"/>
<rect x="21.5" y="1660" width="8.5" height="8.5" fill="#afb1b3"/>
<circle cx="2859" cy="59" r="4" fill="#afb1b3"/>
<ellipse cx="2859" cy="71.5" rx="5.2" ry="6.3" fill="#afb1b3"/>
<path d="M2849.5,56 q3,2 7,8 M2868.5,56 q-3,2 -7,8 M2848.5,65.5 h21 M2849.5,77.5 v-6 q1,-3 6,-5 M2868.5,77.5 v-6 q-1,-3 -6,-5" fill="none" stroke="#afb1b3" stroke-width="1.8"/>
<g transform="translate(2852.2,89.5) rotate(90)">
<text x="0" y="0" font-size="21.02" fill="#bbbbbb" textLength="31.5" lengthAdjust="spacing" stroke="#bbbbbb" stroke-width="0.7">Ant</text>
</g>
<path d="M2848,167 v15 a11,4.5 0 0 0 22,0 v-15 Z" fill="#afb1b3"/>
<ellipse cx="2859" cy="167" rx="11" ry="4.5" fill="#afb1b3"/>
<path d="M2848,169.6 a11,4.5 0 0 0 22,0" fill="none" stroke="#3c3f41" stroke-width="1.6"/>
<path d="M2848,175.2 a11,4.5 0 0 0 22,0" fill="none" stroke="#3c3f41" stroke-width="1.6"/>
<path d="M2848,180.8 a11,4.5 0 0 0 22,0" fill="none" stroke="#3c3f41" stroke-width="1.6"/>
<g transform="translate(2852.2,196.5) rotate(90)">
<text x="0" y="0" font-size="21.02" fill="#bbbbbb" textLength="97.5" lengthAdjust="spacing" stroke="#bbbbbb" stroke-width="0.7">Database</text>
</g>
<text x="2846" y="355" font-size="32" fill="#afb1b3" textLength="25.5" lengthAdjust="spacing" font-weight="bold" font-style="italic">m</text>
<g transform="translate(2852.2,368.5) rotate(90)">
<text x="0" y="0" font-size="21.02" fill="#bbbbbb" textLength="65.0" lengthAdjust="spacing" stroke="#bbbbbb" stroke-width="0.7">Maven</text>
</g>
<circle cx="2859" cy="490.5" r="10.5" fill="#afb1b3"/>
<path d="M2857,488 l5,5 l9,-9" fill="none" stroke="#3c3f41" stroke-width="4.5"/>
<path d="M2860,491 l4,4 l8,-8" fill="none" stroke="#afb1b3" stroke-width="2.4"/>
<g transform="translate(2852.2,512.5) rotate(90)">
<text x="0" y="0" font-size="21.02" fill="#bbbbbb" textLength="158.0" lengthAdjust="spacing" stroke="#bbbbbb" stroke-width="0.7">Bean Validation</text>
</g>
</svg>
</body></html>
